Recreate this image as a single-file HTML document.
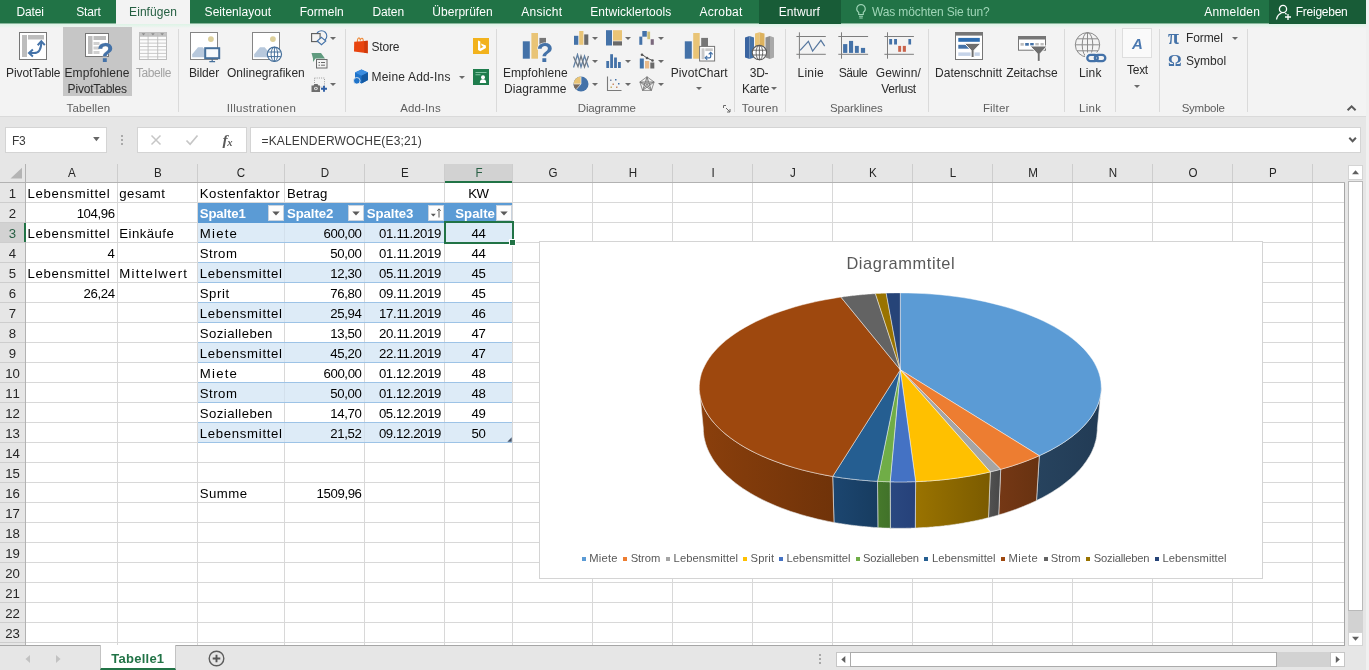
<!DOCTYPE html><html><head><meta charset="utf-8"><title>Excel</title><style>
*{box-sizing:border-box;margin:0;padding:0}
html,body{width:1369px;height:670px;overflow:hidden;background:#fff}
body{font-family:"Liberation Sans",sans-serif;font-size:12px;color:#262626;position:relative}
.abs{position:absolute}
.t{position:absolute;white-space:nowrap;line-height:1}
#tabbar{position:absolute;left:0;top:0;width:1366px;height:24px;background:#217346;border-bottom:1px solid #86b69b}
#tabbar .t{color:#fff;font-size:12px;top:6px}
#ribbon{position:absolute;left:0;top:24px;width:1366px;height:92px;background:linear-gradient(#def3e6,#e6f4ec 2px,#f3f3f3 4px,#f3f3f3)}
.rl{position:absolute;white-space:nowrap;font-size:12px;line-height:1;color:#262626;text-align:center;transform:translateX(-50%)}
.gl{position:absolute;white-space:nowrap;font-size:11.5px;line-height:1;color:#5c5c5c;top:102px;transform:translateX(-50%)}
.sep{position:absolute;top:29px;width:1px;height:83px;background:#dadada}
#fbar{position:absolute;left:0;top:116px;width:1366px;height:48px;background:#e6e6e6;border-top:1px solid #dadada}
.box{position:absolute;background:#fff;border:1px solid #d4d4d4}
#grid{position:absolute;left:0;top:164px;width:1345px;height:481px;background:#fff;overflow:hidden}
.ch{position:absolute;top:0;height:19px;background:#e6e6e6;font-size:13.5px;line-height:19px;text-align:center;color:#262626;border-right:1px solid #cfcfcf}
.rh{position:absolute;left:0;width:26px;height:20px;background:#e6e6e6;font-size:13.5px;line-height:20px;text-align:center;color:#262626;border-bottom:1px solid #cfcfcf}
.vl{position:absolute;top:19px;width:1px;height:461px;background:#d9d9d9}
.hl{position:absolute;left:26px;height:1px;width:1319px;background:#d9d9d9}
.c{position:absolute;height:19px;line-height:19px;font-size:14.2px;white-space:nowrap;color:#000;overflow:hidden}
.c.r{text-align:right;letter-spacing:-0.55px}
.c.m{text-align:center;letter-spacing:-0.55px}
.hd{position:absolute;height:20px;background:#5b9bd5;color:#fff;font-weight:700;font-size:13.6px;letter-spacing:-0.4px;line-height:19px;white-space:nowrap;overflow:hidden}
.fb{position:absolute;top:3px;width:14px;height:14px;background:#fff;border:1px solid #bcbcbc}
#bottom{position:absolute;left:0;top:645px;width:1369px;height:25px;background:#e6e6e6;border-top:1px solid #b5b5b5}
</style></head><body><div id="root" style="position:absolute;left:0;top:0;width:1369px;height:670px;will-change:transform">
<div id="tabbar">
<div class="abs" style="left:116px;top:0;width:74px;height:25px;background:#f3f3f3"></div>
<div class="abs" style="left:759px;top:0;width:82px;height:24px;background:#185c37"></div>
<div class="abs" style="left:1269px;top:0;width:97px;height:24px;background:#185c37"></div>
<span class="t" style="left:16.6px;letter-spacing:-0.179px">Datei</span>
<span class="t" style="left:76.2px;letter-spacing:-0.161px">Start</span>
<span class="t" style="left:204.6px;letter-spacing:0.032px">Seitenlayout</span>
<span class="t" style="left:299.7px;letter-spacing:0.014px">Formeln</span>
<span class="t" style="left:372.5px;letter-spacing:-0.108px">Daten</span>
<span class="t" style="left:432.3px;letter-spacing:0.028px">Überprüfen</span>
<span class="t" style="left:521.3px;letter-spacing:0.24px">Ansicht</span>
<span class="t" style="left:590.3px;letter-spacing:0.069px">Entwicklertools</span>
<span class="t" style="left:699.5px;letter-spacing:0.24px">Acrobat</span>
<span class="t" style="left:778.7px;letter-spacing:0.069px">Entwurf</span>
<span class="t" style="left:1204.2px;letter-spacing:0.236px">Anmelden</span>
<span class="t" style="left:1295.7px;letter-spacing:-0.243px">Freigeben</span>
<span class="t" style="left:129.1px;color:#255f42;letter-spacing:0.061px">Einfügen</span>
<span class="t" style="left:872px;color:#9fd5b7;letter-spacing:-0.131px">Was möchten Sie tun?</span>
<svg class="abs" style="left:854px;top:3px" width="14" height="18" viewBox="0 0 14 18"><path d="M7 1.5a4.3 4.3 0 0 0-2.3 7.9v2.1h4.6V9.4A4.3 4.3 0 0 0 7 1.5z" fill="none" stroke="#9fd5b7" stroke-width="1.1"/><path d="M5 13.2h4M5.3 15h3.4" stroke="#9fd5b7" stroke-width="1.1"/></svg>
<svg class="abs" style="left:1275px;top:3px" width="18" height="18" viewBox="0 0 18 18"><circle cx="8" cy="6" r="3.6" fill="none" stroke="#fff" stroke-width="1.3"/><path d="M1.5 16.5c.6-3.6 2.8-5.6 5-6.3M10 10.3c.6.2 1.2.6 1.7 1" fill="none" stroke="#fff" stroke-width="1.3"/><path d="M13 11v6M10 14h6" stroke="#fff" stroke-width="1.3"/></svg>
</div>
<div class="abs" style="left:1366px;top:0;width:3px;height:670px;background:#f0f0f0"></div>
<div id="ribbon"></div>
<div id="ribboncontent" class="abs" style="left:0;top:0;width:1366px;height:117px">
<div class="sep" style="left:178px"></div>
<div class="sep" style="left:345px"></div>
<div class="sep" style="left:496px"></div>
<div class="sep" style="left:734px"></div>
<div class="sep" style="left:785px"></div>
<div class="sep" style="left:928px"></div>
<div class="sep" style="left:1064px"></div>
<div class="sep" style="left:1115px"></div>
<div class="sep" style="left:1159px"></div>
<div class="sep" style="left:1247px"></div>
<svg class="abs" style="left:19px;top:32px" width="28" height="28" viewBox="0 0 28 28"><rect x="0.5" y="0.5" width="27" height="27" fill="#fff" stroke="#767676"/>
<rect x="3" y="3" width="5" height="22" fill="#bdbdbd"/><rect x="9" y="3" width="16" height="4.5" fill="#bdbdbd"/>
<path d="M10.200 21.100H15C20 21.100 22.300 18 22.300 10" fill="none" stroke="#4472a8" stroke-width="2"/>
<path d="M18.700 13.200L22.300 9.300 25.800 13.200" fill="none" stroke="#4472a8" stroke-width="2"/>
<path d="M13.900 17.600L10 21.100 13.900 24.600" fill="none" stroke="#4472a8" stroke-width="2"/></svg>
<span class="t" style="left:6.0px;top:67.0px;font-size:12px;letter-spacing:-0.097px;color:#2b2b2b">PivotTable</span>
<div class="abs" style="left:63px;top:27px;width:69px;height:69px;background:#c6c6c6"></div>
<svg class="abs" style="left:85px;top:33px" width="28" height="30" viewBox="0 0 28 30"><rect x="0.500" y="0.500" width="23" height="23" fill="#fff" stroke="#767676"/>
<rect x="3" y="3" width="4.500" height="18" fill="#bdbdbd"/><rect x="8.500" y="3" width="12.500" height="4" fill="#bdbdbd"/>
<rect x="8.500" y="9" width="6" height="3" fill="#d0d0d0"/><rect x="8.500" y="13.500" width="6" height="3" fill="#d0d0d0"/><rect x="8.500" y="18" width="6" height="3" fill="#d0d0d0"/>
<text x="12.100" y="28.500" font-family="Liberation Sans" font-weight="700" font-size="27.5" fill="#4472a8" stroke="#c6c6c6" stroke-width="0.600" paint-order="stroke">?</text></svg>
<span class="t" style="left:64.5px;top:67.0px;font-size:12px;letter-spacing:0.106px;color:#2b2b2b">Empfohlene</span>
<span class="t" style="left:67.6px;top:83.0px;font-size:12px;letter-spacing:-0.188px;color:#2b2b2b">PivotTables</span>
<svg class="abs" style="left:139px;top:32px" width="28" height="28" viewBox="0 0 28 28"><rect x="0.500" y="0.500" width="27" height="27" fill="#fcfcfc" stroke="#bdbdbd"/><rect x="0.500" y="0.500" width="27" height="3.800" fill="#c4c4c4"/><path d="M9.1 1V28" stroke="#bdbdbd" stroke-width="0.900"/><path d="M18.7 1V28" stroke="#bdbdbd" stroke-width="0.900"/><path d="M0 4.30H28" stroke="#bdbdbd" stroke-width="0.800"/><path d="M0 7.72H28" stroke="#bdbdbd" stroke-width="0.800"/><path d="M0 11.14H28" stroke="#bdbdbd" stroke-width="0.800"/><path d="M0 14.56H28" stroke="#bdbdbd" stroke-width="0.800"/><path d="M0 17.98H28" stroke="#bdbdbd" stroke-width="0.800"/><path d="M0 21.40H28" stroke="#bdbdbd" stroke-width="0.800"/><path d="M0 24.82H28" stroke="#bdbdbd" stroke-width="0.800"/><path d="M2.7 1.300h3.600l-1.800 2.200z" fill="#8c8c8c"/><path d="M12.1 1.300h3.600l-1.800 2.200z" fill="#8c8c8c"/><path d="M21.4 1.300h3.600l-1.800 2.200z" fill="#8c8c8c"/></svg>
<span class="t" style="left:136.0px;top:67.0px;font-size:12px;letter-spacing:-0.422px;color:#a3a3a3">Tabelle</span>
<span class="t" style="left:66.6px;top:103.2px;font-size:11.5px;letter-spacing:0.087px;color:#5e5e5e">Tabellen</span>
<svg class="abs" style="left:190px;top:32px" width="32" height="32" viewBox="0 0 32 32"><rect x="0.500" y="0.500" width="27" height="27" fill="#fff" stroke="#858585"/>
<circle cx="20.900" cy="7.100" r="2.900" fill="#dccf9a"/>
<path d="M2.200 25.300V22.200l5.800-7h4.700l8.300 10.100z" fill="#b7c8dc"/><rect x="15.200" y="16.200" width="14" height="10" fill="#f6f9fc" stroke="#46709b" stroke-width="2"/><path d="M22.200 27v2.300M19.300 29.700h5.800" stroke="#46709b" stroke-width="1.200"/></svg>
<span class="t" style="left:188.9px;top:67.0px;font-size:12px;letter-spacing:-0.078px;color:#2b2b2b">Bilder</span>
<svg class="abs" style="left:252px;top:32px" width="32" height="32" viewBox="0 0 32 32"><rect x="0.500" y="0.500" width="27" height="27" fill="#fff" stroke="#858585"/>
<circle cx="20.900" cy="7.100" r="2.900" fill="#dccf9a"/>
<path d="M2.200 25.300V22.200l5.800-7h4.700l8.300 10.100z" fill="#b7c8dc"/><circle cx="22.400" cy="22.300" r="7.100" fill="#fff" stroke="#46709b" stroke-width="1.200"/>
<ellipse cx="22.400" cy="22.300" rx="3.300" ry="7.100" fill="none" stroke="#46709b" stroke-width="1"/>
<path d="M16 20h12.800M16 24.600h12.800M22.400 15.200v14.200" stroke="#46709b" stroke-width="1" fill="none"/></svg>
<span class="t" style="left:227.0px;top:67.0px;font-size:12px;letter-spacing:0.031px;color:#2b2b2b">Onlinegrafiken</span>
<svg class="abs" style="left:311px;top:30px" width="17" height="16" viewBox="0 0 17 16"><circle cx="10.500" cy="6" r="5.300" fill="#f3f3f3" stroke="#4472a8" stroke-width="1.100"/>
<rect x="0.600" y="3.600" width="8.500" height="8" fill="#f3f3f3" stroke="#5a5a5a" stroke-width="1.100"/>
<path d="M10.500 7.300l4.300 3.700-4.300 3.700-4.300-3.700z" fill="#f3f3f3" stroke="#4472a8" stroke-width="1.100"/></svg>
<div class="abs" style="left:330.4px;top:36.9px;width:0;height:0;border-left:3.2px solid transparent;border-right:3.2px solid transparent;border-top:3.5px solid #6a6a6a"></div>
<svg class="abs" style="left:311px;top:52px" width="17" height="17" viewBox="0 0 17 17"><path d="M0.500 1h9.500l4 5.500h-9.500l-2.500 3.500v-3.500z" fill="#5f9a7e"/>
<rect x="5.500" y="7.500" width="10.500" height="8.500" fill="#f3f3f3" stroke="#6a6a6a" stroke-width="1"/>
<path d="M7.500 10.500h1.500M10 10.500h4M7.500 13.200h1.500M10 13.200h4" stroke="#6a6a6a" stroke-width="1"/></svg>
<svg class="abs" style="left:311px;top:77px" width="17" height="16" viewBox="0 0 17 16"><rect x="3.500" y="1" width="10" height="9" fill="none" stroke="#8a8a8a" stroke-width="0.800" stroke-dasharray="1 1.200"/>
<path d="M0.500 8.500h2l1-1.500h3l1 1.500h1.500v6.500h-8.500z" fill="#6e6e6e"/><circle cx="4.900" cy="11.500" r="1.800" fill="#f3f3f3"/><circle cx="4.900" cy="11.500" r="0.900" fill="#6e6e6e"/>
<path d="M10 11.700h6M13 8.700v6" stroke="#2f5fa5" stroke-width="1.900"/></svg>
<div class="abs" style="left:330.4px;top:83.4px;width:0;height:0;border-left:3.2px solid transparent;border-right:3.2px solid transparent;border-top:3.5px solid #6a6a6a"></div>
<span class="t" style="left:226.8px;top:103.2px;font-size:11.5px;letter-spacing:0.302px;color:#5e5e5e">Illustrationen</span>
<svg class="abs" style="left:353px;top:35px" width="17" height="19" viewBox="0 0 17 19"><path d="M4.300 7.200C4.300 1.800 7 1.800 7.300 5.500 7.800 2.200 10.300 2.400 10.300 6.300" fill="none" stroke="#ee8a3a" stroke-width="1.100"/><path d="M1.200 6.700l13.500-1v12.500l-13.700-1.800z" fill="#e8440f"/><path d="M11.300 5.950l3.400-.25v12.500l-3.400-.45z" fill="#cf3a0c"/></svg>
<span class="t" style="left:371.5px;top:41.0px;font-size:12px;letter-spacing:-0.172px;color:#2b2b2b">Store</span>
<svg class="abs" style="left:353px;top:69px" width="17" height="16" viewBox="0 0 17 16"><path d="M8.500 0.500l6.500 3v7.500l-6.500 3.500-6.500-3.500v-7.500z" fill="#1f73c9"/><path d="M8.500 0.500l6.500 3-6.500 3.300-6.500-3.300z" fill="#3b8de0"/><path d="M8.500 6.800l6.500-3.300v7.500l-6.500 3.500z" fill="#155aa3"/><circle cx="3.800" cy="11.800" r="3.300" fill="#1f73c9" stroke="#f3f3f3" stroke-width="0.800"/></svg>
<span class="t" style="left:371.5px;top:71.0px;font-size:12px;letter-spacing:0.182px;color:#2b2b2b">Meine Add-Ins</span>
<div class="abs" style="left:459.2px;top:76.0px;width:0;height:0;border-left:3.2px solid transparent;border-right:3.2px solid transparent;border-top:3.5px solid #6a6a6a"></div>
<svg class="abs" style="left:473px;top:38px" width="16" height="16" viewBox="0 0 16 16"><rect width="16" height="16" fill="#f2b21c"/><path d="M5 2.500l2.300.9v7l3.200-1.700-1.600-.8-1-2.300 5 1.800v2.500l-5.600 3.300-2.300-1.300z" fill="#fff"/></svg>
<svg class="abs" style="left:473px;top:69px" width="16" height="16" viewBox="0 0 16 16"><rect width="16" height="16" fill="#1f7d4d"/><path d="M2.500 3.500h11M2.500 5.800h5" stroke="#7fc3a0" stroke-width="1.100"/><circle cx="10" cy="8.200" r="2" fill="#fff"/><path d="M6.800 14c0-2.800 1.300-3.800 3.200-3.800s3.200 1 3.200 3.800z" fill="#fff"/></svg>
<span class="t" style="left:400.3px;top:103.2px;font-size:11.5px;letter-spacing:0.118px;color:#5e5e5e">Add-Ins</span>
<svg class="abs" style="left:520px;top:32px" width="34" height="32" viewBox="0 0 34 32"><rect x="2.800" y="9.300" width="7" height="17.400" fill="#4472a8"/><rect x="11.400" y="1" width="6.600" height="25.700" fill="#e9c476"/><rect x="19.400" y="5.900" width="6.600" height="8" fill="#767676"/>
<text x="16.600" y="29.500" font-family="Liberation Sans" font-weight="700" font-size="27.5" fill="#4472a8" stroke="#f3f3f3" stroke-width="1.200" paint-order="stroke">?</text></svg>
<span class="t" style="left:502.9px;top:67.0px;font-size:12px;letter-spacing:0.084px;color:#2b2b2b">Empfohlene</span>
<span class="t" style="left:504.0px;top:83.0px;font-size:12px;letter-spacing:0.061px;color:#2b2b2b">Diagramme</span>
<svg class="abs" style="left:573px;top:30px" width="16" height="16" viewBox="0 0 16 16"><rect x="1" y="5.800" width="4.300" height="9" fill="#4472a8"/><rect x="6.200" y="1" width="4.200" height="13.800" fill="#e9c476"/><rect x="11.200" y="4.400" width="4.100" height="10.400" fill="#6a6a6a"/></svg>
<svg class="abs" style="left:606px;top:30px" width="16" height="16" viewBox="0 0 16 16"><rect x="0" y="0.200" width="6" height="15.300" fill="#4472a8"/><rect x="7" y="0.200" width="9" height="10.400" fill="#e9c476"/><rect x="7" y="11.300" width="9" height="4.200" fill="#6a6a6a"/></svg>
<svg class="abs" style="left:639px;top:30px" width="16" height="16" viewBox="0 0 16 16"><rect x="0.300" y="6.600" width="3" height="8.200" fill="#4472a8"/><rect x="3.300" y="1" width="4.500" height="5.700" fill="#4472a8"/><rect x="8.300" y="1.600" width="2.800" height="7.600" fill="#cdbf78"/><rect x="11.700" y="9.200" width="3.100" height="5.600" fill="#7a687c"/></svg>
<svg class="abs" style="left:573px;top:53px" width="16" height="16" viewBox="0 0 16 16"><path d="M0.500 14.500L4.500 1.500 8 14 11.500 3 15.500 14.500" fill="none" stroke="#5f7fa3" stroke-width="1.300"/><path d="M0.500 3.500L5 13.500 8 3 11.500 14 15.500 3" fill="none" stroke="#6e7884" stroke-width="1.300"/></svg>
<svg class="abs" style="left:606px;top:53px" width="16" height="16" viewBox="0 0 16 16"><rect x="0.300" y="8" width="2.800" height="7" fill="#4472a8"/><rect x="4.200" y="1.200" width="2.800" height="13.800" fill="#4472a8"/><rect x="8.100" y="4.500" width="2.800" height="10.500" fill="#4472a8"/><rect x="12" y="9" width="2.800" height="6" fill="#4472a8"/></svg>
<svg class="abs" style="left:639px;top:53px" width="16" height="16" viewBox="0 0 16 16"><rect x="0.800" y="5.500" width="4" height="10" fill="#4472a8"/><rect x="6" y="8" width="4.200" height="7.500" fill="#e8b98a"/><rect x="11.300" y="9.500" width="4" height="6" fill="#6a6a6a"/><path d="M3 1.500l5 3.500 5.500 2.500" stroke="#555" stroke-width="1" fill="none"/><circle cx="3" cy="1.700" r="1.300" fill="#555"/><circle cx="8" cy="5" r="1.300" fill="#555"/><circle cx="13.500" cy="7.500" r="1.300" fill="#555"/></svg>
<svg class="abs" style="left:573px;top:76px" width="16" height="16" viewBox="0 0 16 16"><circle cx="8" cy="8" r="7.500" fill="#4472a8"/><path d="M8 8V0.500A7.500 7.500 0 0 0 0.500 8z" fill="#e9c476"/><path d="M8 8H0.500a7.500 7.500 0 0 0 2.600 5.700z" fill="#7a6a5a"/><path d="M8 0.500V8H0.500M8 8l-5 5.700" stroke="#f3f3f3" stroke-width="0.700" fill="none"/></svg>
<svg class="abs" style="left:606px;top:76px" width="16" height="16" viewBox="0 0 16 16"><path d="M1.500 0.500V14.500H15.500" fill="none" stroke="#7a7a7a" stroke-width="1.100"/><rect x="4" y="3.500" width="1.500" height="1.500" fill="#7a8aa8"/><rect x="9" y="3" width="1.500" height="1.500" fill="#4472a8"/><rect x="6.500" y="7.500" width="1.500" height="1.500" fill="#c98a6a"/><rect x="12" y="7" width="1.500" height="1.500" fill="#4472a8"/><rect x="4.500" y="10.500" width="1.500" height="1.500" fill="#c9b06a"/><rect x="10" y="10.500" width="1.500" height="1.500" fill="#c98a6a"/></svg>
<svg class="abs" style="left:639px;top:76px" width="16" height="16" viewBox="0 0 16 16"><polygon points="8.0,0.8 15.1,6.0 12.4,14.4 3.6,14.4 0.9,6.0" fill="none" stroke="#858585" stroke-width="0.900"/><polygon points="8.0,0.8 12.4,14.4 0.9,6.0 15.1,6.0 3.6,14.4" fill="none" stroke="#7a7a7a" stroke-width="0.900"/><path d="M8 8.300L8.0 0.8M8 8.300L15.1 6.0M8 8.300L12.4 14.4M8 8.300L3.6 14.4M8 8.300L0.9 6.0" stroke="#7a7a7a" stroke-width="0.900" fill="none"/></svg>
<div class="abs" style="left:592.4px;top:36.9px;width:0;height:0;border-left:3.2px solid transparent;border-right:3.2px solid transparent;border-top:3.5px solid #6a6a6a"></div>
<div class="abs" style="left:592.4px;top:60.2px;width:0;height:0;border-left:3.2px solid transparent;border-right:3.2px solid transparent;border-top:3.5px solid #6a6a6a"></div>
<div class="abs" style="left:592.4px;top:83.4px;width:0;height:0;border-left:3.2px solid transparent;border-right:3.2px solid transparent;border-top:3.5px solid #6a6a6a"></div>
<div class="abs" style="left:625.3px;top:36.9px;width:0;height:0;border-left:3.2px solid transparent;border-right:3.2px solid transparent;border-top:3.5px solid #6a6a6a"></div>
<div class="abs" style="left:625.3px;top:60.2px;width:0;height:0;border-left:3.2px solid transparent;border-right:3.2px solid transparent;border-top:3.5px solid #6a6a6a"></div>
<div class="abs" style="left:625.3px;top:83.4px;width:0;height:0;border-left:3.2px solid transparent;border-right:3.2px solid transparent;border-top:3.5px solid #6a6a6a"></div>
<div class="abs" style="left:658.3px;top:36.9px;width:0;height:0;border-left:3.2px solid transparent;border-right:3.2px solid transparent;border-top:3.5px solid #6a6a6a"></div>
<div class="abs" style="left:658.3px;top:60.2px;width:0;height:0;border-left:3.2px solid transparent;border-right:3.2px solid transparent;border-top:3.5px solid #6a6a6a"></div>
<div class="abs" style="left:658.3px;top:83.4px;width:0;height:0;border-left:3.2px solid transparent;border-right:3.2px solid transparent;border-top:3.5px solid #6a6a6a"></div>
<svg class="abs" style="left:683px;top:32px" width="34" height="32" viewBox="0 0 34 32"><rect x="1.800" y="9.300" width="7" height="17.400" fill="#4472a8"/><rect x="10.200" y="1" width="6.500" height="25.700" fill="#e9c476"/><rect x="18.200" y="5.900" width="6.800" height="9" fill="#767676"/>
<rect x="16.600" y="14.400" width="15" height="14.600" fill="#fff" stroke="#767676" stroke-width="1"/><rect x="18.500" y="16.300" width="3" height="11" fill="#c8c8c8"/><rect x="22.300" y="16.300" width="7.500" height="2.800" fill="#c8c8c8"/>
<path d="M22.300 25.800H26.500C27.500 25.800 27.700 25.300 27.700 24.500V20.800" fill="none" stroke="#4472a8" stroke-width="1.300"/><path d="M25.700 22.400l2-2.100 2 2.100M24.200 23.900l-2 1.900 2 1.900" fill="none" stroke="#4472a8" stroke-width="1.200"/></svg>
<span class="t" style="left:670.7px;top:67.0px;font-size:12px;letter-spacing:0.108px;color:#2b2b2b">PivotChart</span>
<div class="abs" style="left:696.2px;top:87.1px;width:0;height:0;border-left:3.2px solid transparent;border-right:3.2px solid transparent;border-top:3.5px solid #6a6a6a"></div>
<svg class="abs" style="left:723px;top:105px" width="8" height="8" viewBox="0 0 8 8"><path d="M0.500 3V0.500H3M3 3l4 4M7 4v3H4" fill="none" stroke="#6a6a6a" stroke-width="1"/></svg>
<span class="t" style="left:577.8px;top:103.2px;font-size:11.5px;letter-spacing:-0.173px;color:#5e5e5e">Diagramme</span>
<svg class="abs" style="left:744px;top:32px" width="32" height="30" viewBox="0 0 32 30"><path d="M1 5.500l4.500-1.500v23l-4.500-1.500z" fill="#3a64a0"/><path d="M5.500 4l4.500 1.500v20l-4.500 1.500z" fill="#4472a8"/>
<path d="M11 1.500l4.500-1.200v14h-4.500z" fill="#e9c476"/><path d="M15.500 0.300l5 1.200v12.800h-5z" fill="#ddb25e"/>
<path d="M21.500 5.500l4.500-1.500v23l-4.500-1.500z" fill="#8f8f8f"/><path d="M26 4l4 1.500v20l-4 1.500z" fill="#a9a9a9"/>
<circle cx="15.400" cy="20.600" r="7.200" fill="#fff" stroke="#5a5a5a" stroke-width="1.100"/><ellipse cx="15.400" cy="20.600" rx="3.300" ry="7.200" fill="none" stroke="#5a5a5a" stroke-width="0.900"/><path d="M9 18.200h12.800M9 23h12.800M15.400 13.400v14.400" stroke="#5a5a5a" stroke-width="0.900"/></svg>
<span class="t" style="left:749.8px;top:67.0px;font-size:12px;letter-spacing:-0.272px;color:#2b2b2b">3D-</span>
<span class="t" style="left:742.0px;top:83.0px;font-size:12px;letter-spacing:-0.297px;color:#2b2b2b">Karte</span>
<div class="abs" style="left:771.1px;top:87.1px;width:0;height:0;border-left:3.2px solid transparent;border-right:3.2px solid transparent;border-top:3.5px solid #6a6a6a"></div>
<span class="t" style="left:741.7px;top:103.2px;font-size:11.5px;letter-spacing:0.276px;color:#5e5e5e">Touren</span>
<svg class="abs" style="left:796px;top:32px" width="31" height="28" viewBox="0 0 31 28"><path d="M3.400 0.300V26.700M0.400 4.500H29.800M0.400 22.300H29.800" stroke="#7d7d7d" stroke-width="1" fill="none"/><path d="M4.100 18.400L12.400 9.300 16.600 19.100 24.900 8.400 28.700 14.200" fill="none" stroke="#56779f" stroke-width="1.200"/></svg>
<span class="t" style="left:797.6px;top:67.0px;font-size:12px;letter-spacing:0.21px;color:#2b2b2b">Linie</span>
<svg class="abs" style="left:838px;top:32px" width="31" height="28" viewBox="0 0 31 28"><path d="M3.500 0.300V26.700M0.300 4.500H30.100M0.300 22.300H30.100" stroke="#7d7d7d" stroke-width="1" fill="none"/><rect x="5.100" y="12.100" width="4.200" height="8.800" fill="#4472a8"/><rect x="11" y="8.900" width="4.100" height="12" fill="#4472a8"/><rect x="16.900" y="13.900" width="3.900" height="7" fill="#4472a8"/><rect x="22.900" y="15.900" width="4.200" height="5" fill="#4472a8"/></svg>
<span class="t" style="left:838.7px;top:67.0px;font-size:12px;letter-spacing:-0.451px;color:#2b2b2b">Säule</span>
<svg class="abs" style="left:884px;top:32px" width="31" height="28" viewBox="0 0 31 28"><path d="M3.500 0.300V26.700M0.400 4.500H29.900M0.400 22.300H29.900" stroke="#7d7d7d" stroke-width="1" fill="none"/><rect x="5.200" y="7" width="2.900" height="5.500" fill="#4472a8"/><rect x="10.100" y="7" width="2.900" height="5.500" fill="#4472a8"/><rect x="24.400" y="7" width="2.700" height="5.500" fill="#4472a8"/><rect x="14.200" y="13.900" width="2.900" height="5.900" fill="#c9624a"/><rect x="18.800" y="13.900" width="3.100" height="5.900" fill="#c9624a"/></svg>
<span class="t" style="left:875.7px;top:67.0px;font-size:12px;letter-spacing:0.195px;color:#2b2b2b">Gewinn/</span>
<span class="t" style="left:881.3px;top:83.0px;font-size:12px;letter-spacing:-0.298px;color:#2b2b2b">Verlust</span>
<span class="t" style="left:829.9px;top:103.2px;font-size:11.5px;letter-spacing:-0.084px;color:#5e5e5e">Sparklines</span>
<svg class="abs" style="left:955px;top:32px" width="28" height="28" viewBox="0 0 28 28"><rect x="0.500" y="0.500" width="27" height="27" fill="#fff" stroke="#767676"/><rect x="0" y="0" width="28" height="3.600" fill="#767676"/>
<rect x="3.300" y="5.900" width="21.500" height="3.900" fill="#2e6db0"/><rect x="3.300" y="12.800" width="12.500" height="3.900" fill="#4472a8"/><rect x="3.300" y="20.400" width="21.500" height="3.500" fill="#c5d3e8"/>
<path d="M9.300 11.300h16.600l-6.800 7v7.200h-3v-7.200z" fill="#6e6e6e" stroke="#fff" stroke-width="1"/></svg>
<span class="t" style="left:935.1px;top:67.0px;font-size:12px;letter-spacing:0.027px;color:#2b2b2b">Datenschnitt</span>
<svg class="abs" style="left:1018px;top:36px" width="30" height="27" viewBox="0 0 30 27"><rect x="0.500" y="0.500" width="27" height="13.700" fill="#fff" stroke="#767676"/><rect x="0" y="0" width="28" height="3.500" fill="#767676"/>
<rect x="2.500" y="7" width="3.300" height="2.700" fill="#bdbdbd"/><rect x="7.200" y="7" width="3.600" height="2.700" fill="#4472a8"/><rect x="12.200" y="7" width="3.500" height="2.700" fill="#4472a8"/><rect x="17.300" y="7" width="3.500" height="2.700" fill="#bdbdbd"/><rect x="22.500" y="7" width="3.200" height="2.700" fill="#bdbdbd"/>
<path d="M12 10h17.200l-7 7.600v7.800h-3v-7.800z" fill="#6e6e6e" stroke="#fff" stroke-width="1"/></svg>
<span class="t" style="left:1006.2px;top:67.0px;font-size:12px;letter-spacing:-0.079px;color:#2b2b2b">Zeitachse</span>
<span class="t" style="left:982.9px;top:103.2px;font-size:11.5px;letter-spacing:0.197px;color:#5e5e5e">Filter</span>
<svg class="abs" style="left:1074px;top:31.7px" width="34" height="32" viewBox="0 0 34 32"><circle cx="13.500" cy="12.800" r="12.200" fill="none" stroke="#8a8a8a" stroke-width="1"/><ellipse cx="13.500" cy="12.800" rx="5.300" ry="12.200" fill="none" stroke="#8a8a8a" stroke-width="1"/>
<path d="M1.300 12.800h24.400M3 6.800h21M3 18.800h21M13.500 0.600v24.400" stroke="#8a8a8a" stroke-width="1" fill="none"/>
<rect x="11" y="20.500" width="22" height="11" fill="#f3f3f3"/>
<rect x="13.300" y="22.800" width="10.500" height="6.400" rx="3.200" fill="none" stroke="#4472a8" stroke-width="2.300"/><rect x="20.800" y="22.800" width="10.500" height="6.400" rx="3.200" fill="none" stroke="#4472a8" stroke-width="2.300"/></svg>
<span class="t" style="left:1079.0px;top:67.0px;font-size:12px;letter-spacing:0.128px;color:#2b2b2b">Link</span>
<span class="t" style="left:1079.0px;top:103.2px;font-size:11.5px;letter-spacing:0.28px;color:#5e5e5e">Link</span>
<div class="abs" style="left:1122px;top:28px;width:30px;height:30px;background:#fafafa;border:1px solid #dedede"></div>
<span class="t" style="left:1132px;top:36px;font-size:15px;font-weight:700;font-style:italic;color:#4a78b0">A</span>
<span class="t" style="left:1127.0px;top:64.0px;font-size:12px;letter-spacing:-0.272px;color:#2b2b2b">Text</span>
<div class="abs" style="left:1134.1px;top:85.4px;width:0;height:0;border-left:3.2px solid transparent;border-right:3.2px solid transparent;border-top:3.5px solid #6a6a6a"></div>
<span class="t" style="left:1168px;top:27px;font-family:'Liberation Serif',serif;font-size:20px;font-weight:700;color:#4472a8">π</span>
<span class="t" style="left:1185.9px;top:32.0px;font-size:12px;letter-spacing:-0.069px;color:#2b2b2b">Formel</span>
<div class="abs" style="left:1231.9px;top:36.9px;width:0;height:0;border-left:3.2px solid transparent;border-right:3.2px solid transparent;border-top:3.5px solid #6a6a6a"></div>
<span class="t" style="left:1168px;top:51.500px;font-family:'Liberation Serif',serif;font-size:17px;font-weight:700;color:#4472a8">Ω</span>
<span class="t" style="left:1185.9px;top:55.0px;font-size:12px;letter-spacing:0.077px;color:#2b2b2b">Symbol</span>
<span class="t" style="left:1181.7px;top:103.2px;font-size:11.5px;letter-spacing:-0.267px;color:#5e5e5e">Symbole</span>
<svg class="abs" style="left:1346px;top:104px" width="12" height="8" viewBox="0 0 12 8"><path d="M1.600 6.300l4-4 4 4" fill="none" stroke="#5a5a5a" stroke-width="2"/></svg>
</div>
<div id="fbar">
<div class="box" style="left:5px;top:10px;width:102px;height:26px"></div>
<span class="t" style="left:12.1px;top:18px;font-size:12px;color:#3a3a3a;letter-spacing:-0.316px">F3</span>
<svg class="abs" style="left:92px;top:18px" width="9" height="8" viewBox="0 0 9 8"><path d="M1.100 1.900h6.600l-3.300 4.400z" fill="#666"/></svg>
<div class="abs" style="left:121px;top:18px;width:2px;height:2px;background:#aaa;box-shadow:0 4px 0 #aaa,0 8px 0 #aaa"></div>
<div class="box" style="left:137px;top:10px;width:110px;height:26px"></div>
<svg class="abs" style="left:149.600px;top:16.80000000000001px" width="12" height="12" viewBox="0 0 12 12"><path d="M1.500 1.500l9 9M10.500 1.500l-9 9" stroke="#c6c6c6" stroke-width="1.500" fill="none"/></svg>
<svg class="abs" style="left:185.100px;top:17.19999999999999px" width="14" height="12" viewBox="0 0 14 12"><path d="M1.500 6.500l3.600 3.800L12.500 1.500" stroke="#c6c6c6" stroke-width="1.700" fill="none"/></svg>
<span class="t" style="left:222.500px;top:14.5px;font-family:'Liberation Serif',serif;font-style:italic;font-weight:700;font-size:15.5px;color:#5a5a5a">f<span style="font-size:10.5px;position:relative;top:1.5px;left:-0.5px">x</span></span>
<div class="box" style="left:250px;top:10px;width:1111px;height:26px"></div>
<span class="t" style="left:261.500px;top:18px;font-size:12px;color:#3a3a3a;letter-spacing:0.169px">=KALENDERWOCHE(E3;21)</span>
<svg class="abs" style="left:1348px;top:19px" width="10" height="8" viewBox="0 0 10 8"><path d="M1.300 1.800l3.300 3.400 3.300-3.400" stroke="#5a5a5a" stroke-width="2" fill="none"/></svg>
</div>
<div class="abs" style="left:0;top:164px;width:1345px;height:481px;background:#fff"></div>
<div class="abs" style="left:0;top:164px;width:1345px;height:18px;background:#e6e6e6"></div>
<div class="abs" style="left:0;top:164px;width:25px;height:481px;background:#e6e6e6"></div>
<div class="abs" style="left:445px;top:164px;width:67px;height:17px;background:#d2d2d2"></div>
<div class="abs" style="left:445px;top:181px;width:67px;height:2px;background:#217346"></div>
<div class="abs" style="left:0;top:223px;width:24px;height:19px;background:#d2d2d2"></div>
<div class="abs" style="left:24px;top:223px;width:2px;height:19px;background:#217346"></div>
<svg class="abs" style="left:9px;top:166px" width="14" height="14" viewBox="0 0 14 14"><path d="M13 1.800V12.600H1.500z" fill="#b4b4b4"/></svg>
<div class="abs" style="left:117px;top:164px;width:1px;height:18px;background:#cdcdcd"></div>
<div class="abs" style="left:197px;top:164px;width:1px;height:18px;background:#cdcdcd"></div>
<div class="abs" style="left:284px;top:164px;width:1px;height:18px;background:#cdcdcd"></div>
<div class="abs" style="left:364px;top:164px;width:1px;height:18px;background:#cdcdcd"></div>
<div class="abs" style="left:444px;top:164px;width:1px;height:18px;background:#cdcdcd"></div>
<div class="abs" style="left:512px;top:164px;width:1px;height:18px;background:#cdcdcd"></div>
<div class="abs" style="left:592px;top:164px;width:1px;height:18px;background:#cdcdcd"></div>
<div class="abs" style="left:672px;top:164px;width:1px;height:18px;background:#cdcdcd"></div>
<div class="abs" style="left:752px;top:164px;width:1px;height:18px;background:#cdcdcd"></div>
<div class="abs" style="left:832px;top:164px;width:1px;height:18px;background:#cdcdcd"></div>
<div class="abs" style="left:912px;top:164px;width:1px;height:18px;background:#cdcdcd"></div>
<div class="abs" style="left:992px;top:164px;width:1px;height:18px;background:#cdcdcd"></div>
<div class="abs" style="left:1072px;top:164px;width:1px;height:18px;background:#cdcdcd"></div>
<div class="abs" style="left:1152px;top:164px;width:1px;height:18px;background:#cdcdcd"></div>
<div class="abs" style="left:1232px;top:164px;width:1px;height:18px;background:#cdcdcd"></div>
<div class="abs" style="left:1312px;top:164px;width:1px;height:18px;background:#cdcdcd"></div>
<div class="abs" style="left:117px;top:183px;width:1px;height:462px;background:#d8d8d8"></div>
<div class="abs" style="left:197px;top:183px;width:1px;height:462px;background:#d8d8d8"></div>
<div class="abs" style="left:284px;top:183px;width:1px;height:462px;background:#d8d8d8"></div>
<div class="abs" style="left:364px;top:183px;width:1px;height:462px;background:#d8d8d8"></div>
<div class="abs" style="left:444px;top:183px;width:1px;height:462px;background:#d8d8d8"></div>
<div class="abs" style="left:512px;top:183px;width:1px;height:462px;background:#d8d8d8"></div>
<div class="abs" style="left:592px;top:183px;width:1px;height:462px;background:#d8d8d8"></div>
<div class="abs" style="left:672px;top:183px;width:1px;height:462px;background:#d8d8d8"></div>
<div class="abs" style="left:752px;top:183px;width:1px;height:462px;background:#d8d8d8"></div>
<div class="abs" style="left:832px;top:183px;width:1px;height:462px;background:#d8d8d8"></div>
<div class="abs" style="left:912px;top:183px;width:1px;height:462px;background:#d8d8d8"></div>
<div class="abs" style="left:992px;top:183px;width:1px;height:462px;background:#d8d8d8"></div>
<div class="abs" style="left:1072px;top:183px;width:1px;height:462px;background:#d8d8d8"></div>
<div class="abs" style="left:1152px;top:183px;width:1px;height:462px;background:#d8d8d8"></div>
<div class="abs" style="left:1232px;top:183px;width:1px;height:462px;background:#d8d8d8"></div>
<div class="abs" style="left:1312px;top:183px;width:1px;height:462px;background:#d8d8d8"></div>
<div class="abs" style="left:26px;top:202px;width:1319px;height:1px;background:#d8d8d8"></div>
<div class="abs" style="left:0;top:202px;width:25px;height:1px;background:#cdcdcd"></div>
<div class="abs" style="left:26px;top:222px;width:1319px;height:1px;background:#d8d8d8"></div>
<div class="abs" style="left:0;top:222px;width:25px;height:1px;background:#cdcdcd"></div>
<div class="abs" style="left:26px;top:242px;width:1319px;height:1px;background:#d8d8d8"></div>
<div class="abs" style="left:0;top:242px;width:25px;height:1px;background:#cdcdcd"></div>
<div class="abs" style="left:26px;top:262px;width:1319px;height:1px;background:#d8d8d8"></div>
<div class="abs" style="left:0;top:262px;width:25px;height:1px;background:#cdcdcd"></div>
<div class="abs" style="left:26px;top:282px;width:1319px;height:1px;background:#d8d8d8"></div>
<div class="abs" style="left:0;top:282px;width:25px;height:1px;background:#cdcdcd"></div>
<div class="abs" style="left:26px;top:302px;width:1319px;height:1px;background:#d8d8d8"></div>
<div class="abs" style="left:0;top:302px;width:25px;height:1px;background:#cdcdcd"></div>
<div class="abs" style="left:26px;top:322px;width:1319px;height:1px;background:#d8d8d8"></div>
<div class="abs" style="left:0;top:322px;width:25px;height:1px;background:#cdcdcd"></div>
<div class="abs" style="left:26px;top:342px;width:1319px;height:1px;background:#d8d8d8"></div>
<div class="abs" style="left:0;top:342px;width:25px;height:1px;background:#cdcdcd"></div>
<div class="abs" style="left:26px;top:362px;width:1319px;height:1px;background:#d8d8d8"></div>
<div class="abs" style="left:0;top:362px;width:25px;height:1px;background:#cdcdcd"></div>
<div class="abs" style="left:26px;top:382px;width:1319px;height:1px;background:#d8d8d8"></div>
<div class="abs" style="left:0;top:382px;width:25px;height:1px;background:#cdcdcd"></div>
<div class="abs" style="left:26px;top:402px;width:1319px;height:1px;background:#d8d8d8"></div>
<div class="abs" style="left:0;top:402px;width:25px;height:1px;background:#cdcdcd"></div>
<div class="abs" style="left:26px;top:422px;width:1319px;height:1px;background:#d8d8d8"></div>
<div class="abs" style="left:0;top:422px;width:25px;height:1px;background:#cdcdcd"></div>
<div class="abs" style="left:26px;top:442px;width:1319px;height:1px;background:#d8d8d8"></div>
<div class="abs" style="left:0;top:442px;width:25px;height:1px;background:#cdcdcd"></div>
<div class="abs" style="left:26px;top:462px;width:1319px;height:1px;background:#d8d8d8"></div>
<div class="abs" style="left:0;top:462px;width:25px;height:1px;background:#cdcdcd"></div>
<div class="abs" style="left:26px;top:482px;width:1319px;height:1px;background:#d8d8d8"></div>
<div class="abs" style="left:0;top:482px;width:25px;height:1px;background:#cdcdcd"></div>
<div class="abs" style="left:26px;top:502px;width:1319px;height:1px;background:#d8d8d8"></div>
<div class="abs" style="left:0;top:502px;width:25px;height:1px;background:#cdcdcd"></div>
<div class="abs" style="left:26px;top:522px;width:1319px;height:1px;background:#d8d8d8"></div>
<div class="abs" style="left:0;top:522px;width:25px;height:1px;background:#cdcdcd"></div>
<div class="abs" style="left:26px;top:542px;width:1319px;height:1px;background:#d8d8d8"></div>
<div class="abs" style="left:0;top:542px;width:25px;height:1px;background:#cdcdcd"></div>
<div class="abs" style="left:26px;top:562px;width:1319px;height:1px;background:#d8d8d8"></div>
<div class="abs" style="left:0;top:562px;width:25px;height:1px;background:#cdcdcd"></div>
<div class="abs" style="left:26px;top:582px;width:1319px;height:1px;background:#d8d8d8"></div>
<div class="abs" style="left:0;top:582px;width:25px;height:1px;background:#cdcdcd"></div>
<div class="abs" style="left:26px;top:602px;width:1319px;height:1px;background:#d8d8d8"></div>
<div class="abs" style="left:0;top:602px;width:25px;height:1px;background:#cdcdcd"></div>
<div class="abs" style="left:26px;top:622px;width:1319px;height:1px;background:#d8d8d8"></div>
<div class="abs" style="left:0;top:622px;width:25px;height:1px;background:#cdcdcd"></div>
<div class="abs" style="left:26px;top:642px;width:1319px;height:1px;background:#d8d8d8"></div>
<div class="abs" style="left:0;top:642px;width:25px;height:1px;background:#cdcdcd"></div>
<div class="abs" style="left:0;top:182px;width:1345px;height:1px;background:#b2b2b2"></div>
<div class="abs" style="left:25px;top:164px;width:1px;height:481px;background:#b2b2b2"></div>
<div class="abs" style="left:445px;top:181px;width:67px;height:2px;background:#217346"></div>
<div class="abs" style="left:24px;top:223px;width:2px;height:19px;background:#217346"></div>
<span class="abs" style="left:61.5px;top:165px;width:20px;text-align:center;line-height:16px;font-size:13.2px;color:#262626;transform:scaleX(0.88)">A</span>
<span class="abs" style="left:147.5px;top:165px;width:20px;text-align:center;line-height:16px;font-size:13.2px;color:#262626;transform:scaleX(0.88)">B</span>
<span class="abs" style="left:231.0px;top:165px;width:20px;text-align:center;line-height:16px;font-size:13.2px;color:#262626;transform:scaleX(0.88)">C</span>
<span class="abs" style="left:314.5px;top:165px;width:20px;text-align:center;line-height:16px;font-size:13.2px;color:#262626;transform:scaleX(0.88)">D</span>
<span class="abs" style="left:394.5px;top:165px;width:20px;text-align:center;line-height:16px;font-size:13.2px;color:#262626;transform:scaleX(0.88)">E</span>
<span class="abs" style="left:468.5px;top:165px;width:20px;text-align:center;line-height:16px;font-size:13.2px;color:#2a6045;transform:scaleX(0.88)">F</span>
<span class="abs" style="left:542.5px;top:165px;width:20px;text-align:center;line-height:16px;font-size:13.2px;color:#262626;transform:scaleX(0.88)">G</span>
<span class="abs" style="left:622.5px;top:165px;width:20px;text-align:center;line-height:16px;font-size:13.2px;color:#262626;transform:scaleX(0.88)">H</span>
<span class="abs" style="left:702.5px;top:165px;width:20px;text-align:center;line-height:16px;font-size:13.2px;color:#262626;transform:scaleX(0.88)">I</span>
<span class="abs" style="left:782.5px;top:165px;width:20px;text-align:center;line-height:16px;font-size:13.2px;color:#262626;transform:scaleX(0.88)">J</span>
<span class="abs" style="left:862.5px;top:165px;width:20px;text-align:center;line-height:16px;font-size:13.2px;color:#262626;transform:scaleX(0.88)">K</span>
<span class="abs" style="left:942.5px;top:165px;width:20px;text-align:center;line-height:16px;font-size:13.2px;color:#262626;transform:scaleX(0.88)">L</span>
<span class="abs" style="left:1022.5px;top:165px;width:20px;text-align:center;line-height:16px;font-size:13.2px;color:#262626;transform:scaleX(0.88)">M</span>
<span class="abs" style="left:1102.5px;top:165px;width:20px;text-align:center;line-height:16px;font-size:13.2px;color:#262626;transform:scaleX(0.88)">N</span>
<span class="abs" style="left:1182.5px;top:165px;width:20px;text-align:center;line-height:16px;font-size:13.2px;color:#262626;transform:scaleX(0.88)">O</span>
<span class="abs" style="left:1262.5px;top:165px;width:20px;text-align:center;line-height:16px;font-size:13.2px;color:#262626;transform:scaleX(0.88)">P</span>
<span class="abs" style="left:8.81px;top:183.93px;line-height:19px;white-space:nowrap;font-size:13.2px;font-weight:400;letter-spacing:0.246px;color:#262626">1</span>
<span class="abs" style="left:8.81px;top:203.93px;line-height:19px;white-space:nowrap;font-size:13.2px;font-weight:400;letter-spacing:0.246px;color:#262626">2</span>
<span class="abs" style="left:8.81px;top:223.93px;line-height:19px;white-space:nowrap;font-size:13.2px;font-weight:400;letter-spacing:0.246px;color:#2a6045">3</span>
<span class="abs" style="left:8.81px;top:243.93px;line-height:19px;white-space:nowrap;font-size:13.2px;font-weight:400;letter-spacing:0.246px;color:#262626">4</span>
<span class="abs" style="left:8.81px;top:263.93px;line-height:19px;white-space:nowrap;font-size:13.2px;font-weight:400;letter-spacing:0.246px;color:#262626">5</span>
<span class="abs" style="left:8.81px;top:283.93px;line-height:19px;white-space:nowrap;font-size:13.2px;font-weight:400;letter-spacing:0.246px;color:#262626">6</span>
<span class="abs" style="left:8.81px;top:303.93px;line-height:19px;white-space:nowrap;font-size:13.2px;font-weight:400;letter-spacing:0.246px;color:#262626">7</span>
<span class="abs" style="left:8.81px;top:323.93px;line-height:19px;white-space:nowrap;font-size:13.2px;font-weight:400;letter-spacing:0.246px;color:#262626">8</span>
<span class="abs" style="left:8.81px;top:343.93px;line-height:19px;white-space:nowrap;font-size:13.2px;font-weight:400;letter-spacing:0.246px;color:#262626">9</span>
<span class="abs" style="left:5.37px;top:363.93px;line-height:19px;white-space:nowrap;font-size:13.2px;font-weight:400;letter-spacing:-0.212px;color:#262626">10</span>
<span class="abs" style="left:5.37px;top:383.93px;line-height:19px;white-space:nowrap;font-size:13.2px;font-weight:400;letter-spacing:0.757px;color:#262626">11</span>
<span class="abs" style="left:5.37px;top:403.93px;line-height:19px;white-space:nowrap;font-size:13.2px;font-weight:400;letter-spacing:-0.212px;color:#262626">12</span>
<span class="abs" style="left:5.37px;top:423.93px;line-height:19px;white-space:nowrap;font-size:13.2px;font-weight:400;letter-spacing:-0.212px;color:#262626">13</span>
<span class="abs" style="left:5.37px;top:443.93px;line-height:19px;white-space:nowrap;font-size:13.2px;font-weight:400;letter-spacing:-0.212px;color:#262626">14</span>
<span class="abs" style="left:5.37px;top:463.93px;line-height:19px;white-space:nowrap;font-size:13.2px;font-weight:400;letter-spacing:-0.212px;color:#262626">15</span>
<span class="abs" style="left:5.37px;top:483.93px;line-height:19px;white-space:nowrap;font-size:13.2px;font-weight:400;letter-spacing:-0.212px;color:#262626">16</span>
<span class="abs" style="left:5.37px;top:503.93px;line-height:19px;white-space:nowrap;font-size:13.2px;font-weight:400;letter-spacing:-0.212px;color:#262626">17</span>
<span class="abs" style="left:5.37px;top:523.93px;line-height:19px;white-space:nowrap;font-size:13.2px;font-weight:400;letter-spacing:-0.212px;color:#262626">18</span>
<span class="abs" style="left:5.37px;top:543.93px;line-height:19px;white-space:nowrap;font-size:13.2px;font-weight:400;letter-spacing:-0.212px;color:#262626">19</span>
<span class="abs" style="left:5.37px;top:563.93px;line-height:19px;white-space:nowrap;font-size:13.2px;font-weight:400;letter-spacing:-0.212px;color:#262626">20</span>
<span class="abs" style="left:5.37px;top:583.93px;line-height:19px;white-space:nowrap;font-size:13.2px;font-weight:400;letter-spacing:-0.212px;color:#262626">21</span>
<span class="abs" style="left:5.37px;top:603.93px;line-height:19px;white-space:nowrap;font-size:13.2px;font-weight:400;letter-spacing:-0.212px;color:#262626">22</span>
<span class="abs" style="left:5.37px;top:623.93px;line-height:19px;white-space:nowrap;font-size:13.2px;font-weight:400;letter-spacing:-0.212px;color:#262626">23</span>
<div class="abs" style="left:198px;top:223px;width:314px;height:19px;background:#ddebf7"></div>
<div class="abs" style="left:198px;top:242px;width:314px;height:1px;background:#9dc3e6"></div>
<div class="abs" style="left:198px;top:262px;width:314px;height:1px;background:#9dc3e6"></div>
<div class="abs" style="left:198px;top:263px;width:314px;height:19px;background:#ddebf7"></div>
<div class="abs" style="left:198px;top:282px;width:314px;height:1px;background:#9dc3e6"></div>
<div class="abs" style="left:198px;top:302px;width:314px;height:1px;background:#9dc3e6"></div>
<div class="abs" style="left:198px;top:303px;width:314px;height:19px;background:#ddebf7"></div>
<div class="abs" style="left:198px;top:322px;width:314px;height:1px;background:#9dc3e6"></div>
<div class="abs" style="left:198px;top:342px;width:314px;height:1px;background:#9dc3e6"></div>
<div class="abs" style="left:198px;top:343px;width:314px;height:19px;background:#ddebf7"></div>
<div class="abs" style="left:198px;top:362px;width:314px;height:1px;background:#9dc3e6"></div>
<div class="abs" style="left:198px;top:382px;width:314px;height:1px;background:#9dc3e6"></div>
<div class="abs" style="left:198px;top:383px;width:314px;height:19px;background:#ddebf7"></div>
<div class="abs" style="left:198px;top:402px;width:314px;height:1px;background:#9dc3e6"></div>
<div class="abs" style="left:198px;top:422px;width:314px;height:1px;background:#9dc3e6"></div>
<div class="abs" style="left:198px;top:423px;width:314px;height:19px;background:#ddebf7"></div>
<div class="abs" style="left:198px;top:442px;width:314px;height:1px;background:#9dc3e6"></div>
<div class="abs" style="left:284px;top:223px;width:1px;height:19px;background:#d3e0ec"></div>
<div class="abs" style="left:284px;top:263px;width:1px;height:19px;background:#d3e0ec"></div>
<div class="abs" style="left:284px;top:303px;width:1px;height:19px;background:#d3e0ec"></div>
<div class="abs" style="left:284px;top:343px;width:1px;height:19px;background:#d3e0ec"></div>
<div class="abs" style="left:284px;top:383px;width:1px;height:19px;background:#d3e0ec"></div>
<div class="abs" style="left:284px;top:423px;width:1px;height:19px;background:#d3e0ec"></div>
<div class="abs" style="left:364px;top:223px;width:1px;height:19px;background:#d3e0ec"></div>
<div class="abs" style="left:364px;top:263px;width:1px;height:19px;background:#d3e0ec"></div>
<div class="abs" style="left:364px;top:303px;width:1px;height:19px;background:#d3e0ec"></div>
<div class="abs" style="left:364px;top:343px;width:1px;height:19px;background:#d3e0ec"></div>
<div class="abs" style="left:364px;top:383px;width:1px;height:19px;background:#d3e0ec"></div>
<div class="abs" style="left:364px;top:423px;width:1px;height:19px;background:#d3e0ec"></div>
<div class="abs" style="left:444px;top:223px;width:1px;height:19px;background:#d3e0ec"></div>
<div class="abs" style="left:444px;top:263px;width:1px;height:19px;background:#d3e0ec"></div>
<div class="abs" style="left:444px;top:303px;width:1px;height:19px;background:#d3e0ec"></div>
<div class="abs" style="left:444px;top:343px;width:1px;height:19px;background:#d3e0ec"></div>
<div class="abs" style="left:444px;top:383px;width:1px;height:19px;background:#d3e0ec"></div>
<div class="abs" style="left:444px;top:423px;width:1px;height:19px;background:#d3e0ec"></div>
<div class="abs" style="left:198px;top:203px;width:314px;height:20px;background:#5b9bd5"></div>
<span class="abs" style="left:199.74px;top:203.93px;line-height:19px;white-space:nowrap;font-size:13.2px;font-weight:700;letter-spacing:-0.134px;color:#fff">Spalte1</span>
<span class="abs" style="left:286.94px;top:203.93px;line-height:19px;white-space:nowrap;font-size:13.2px;font-weight:700;letter-spacing:-0.1px;color:#fff">Spalte2</span>
<span class="abs" style="left:366.84px;top:203.93px;line-height:19px;white-space:nowrap;font-size:13.2px;font-weight:700;letter-spacing:-0.067px;color:#fff">Spalte3</span>
<span class="abs" style="left:455.34px;top:203.93px;line-height:19px;white-space:nowrap;font-size:13.2px;font-weight:700;letter-spacing:-0.012px;color:#fff">Spalte</span>
<div class="abs" style="left:268px;top:205px;width:16px;height:16px;background:#fdfdfd;border:1px solid #c9d3de"></div>
<svg class="abs" style="left:268px;top:205px" width="16" height="16" viewBox="0 0 16 16"><path d="M4.300 6.400h7.400l-3.700 4z" fill="#595959"/></svg>
<div class="abs" style="left:348px;top:205px;width:16px;height:16px;background:#fdfdfd;border:1px solid #c9d3de"></div>
<svg class="abs" style="left:348px;top:205px" width="16" height="16" viewBox="0 0 16 16"><path d="M4.300 6.400h7.400l-3.700 4z" fill="#595959"/></svg>
<div class="abs" style="left:428px;top:205px;width:16px;height:16px;background:#fdfdfd;border:1px solid #c9d3de"></div>
<svg class="abs" style="left:428px;top:205px" width="16" height="16" viewBox="0 0 16 16"><path d="M2.800 8.800h5l-2.500 2.800z" fill="#595959"/><path d="M11 12.500V4M9.300 5.800L11 3.800l1.700 2" stroke="#595959" stroke-width="1" fill="none"/></svg>
<div class="abs" style="left:496px;top:205px;width:16px;height:16px;background:#fdfdfd;border:1px solid #c9d3de"></div>
<svg class="abs" style="left:496px;top:205px" width="16" height="16" viewBox="0 0 16 16"><path d="M4.300 6.400h7.400l-3.700 4z" fill="#595959"/></svg>
<span class="abs" style="left:27.44px;top:183.93px;line-height:19px;white-space:nowrap;font-size:13.2px;font-weight:400;letter-spacing:0.685px;color:#000">Lebensmittel</span>
<span class="abs" style="left:119.34px;top:183.93px;line-height:19px;white-space:nowrap;font-size:13.2px;font-weight:400;letter-spacing:0.454px;color:#000">gesamt</span>
<span class="abs" style="left:199.74px;top:183.93px;line-height:19px;white-space:nowrap;font-size:13.2px;font-weight:400;letter-spacing:0.525px;color:#000">Kostenfaktor</span>
<span class="abs" style="left:286.94px;top:183.93px;line-height:19px;white-space:nowrap;font-size:13.2px;font-weight:400;letter-spacing:0.332px;color:#000">Betrag</span>
<span class="abs" style="left:468.34px;top:183.93px;line-height:19px;white-space:nowrap;font-size:13.2px;font-weight:400;letter-spacing:-0.53px;color:#000">KW</span>
<span class="abs" style="left:76.64px;top:203.93px;line-height:19px;white-space:nowrap;font-size:13.2px;font-weight:400;letter-spacing:-0.365px;color:#000">104,96</span>
<span class="abs" style="left:27.44px;top:223.93px;line-height:19px;white-space:nowrap;font-size:13.2px;font-weight:400;letter-spacing:0.685px;color:#000">Lebensmittel</span>
<span class="abs" style="left:119.34px;top:223.93px;line-height:19px;white-space:nowrap;font-size:13.2px;font-weight:400;letter-spacing:0.442px;color:#000">Einkäufe</span>
<span class="abs" style="left:107.57px;top:243.93px;line-height:19px;white-space:nowrap;font-size:13.2px;font-weight:400;letter-spacing:0.246px;color:#000">4</span>
<span class="abs" style="left:27.44px;top:263.93px;line-height:19px;white-space:nowrap;font-size:13.2px;font-weight:400;letter-spacing:0.685px;color:#000">Lebensmittel</span>
<span class="abs" style="left:119.34px;top:263.93px;line-height:19px;white-space:nowrap;font-size:13.2px;font-weight:400;letter-spacing:1.244px;color:#000">Mittelwert</span>
<span class="abs" style="left:83.51px;top:283.93px;line-height:19px;white-space:nowrap;font-size:13.2px;font-weight:400;letter-spacing:-0.341px;color:#000">26,24</span>
<span class="abs" style="left:199.74px;top:223.93px;line-height:19px;white-space:nowrap;font-size:13.2px;font-weight:400;letter-spacing:1.242px;color:#000">Miete</span>
<span class="abs" style="left:323.44px;top:223.93px;line-height:19px;white-space:nowrap;font-size:13.2px;font-weight:400;letter-spacing:-0.365px;color:#000">600,00</span>
<span class="abs" style="left:378.88px;top:223.93px;line-height:19px;white-space:nowrap;font-size:13.2px;font-weight:400;letter-spacing:-0.272px;color:#000">01.11.2019</span>
<span class="abs" style="left:471.47px;top:223.93px;line-height:19px;white-space:nowrap;font-size:13.2px;font-weight:400;letter-spacing:-0.212px;color:#000">44</span>
<span class="abs" style="left:199.74px;top:243.93px;line-height:19px;white-space:nowrap;font-size:13.2px;font-weight:400;letter-spacing:0.512px;color:#000">Strom</span>
<span class="abs" style="left:330.31px;top:243.93px;line-height:19px;white-space:nowrap;font-size:13.2px;font-weight:400;letter-spacing:-0.341px;color:#000">50,00</span>
<span class="abs" style="left:378.88px;top:243.93px;line-height:19px;white-space:nowrap;font-size:13.2px;font-weight:400;letter-spacing:-0.272px;color:#000">01.11.2019</span>
<span class="abs" style="left:471.47px;top:243.93px;line-height:19px;white-space:nowrap;font-size:13.2px;font-weight:400;letter-spacing:-0.212px;color:#000">44</span>
<span class="abs" style="left:199.74px;top:263.93px;line-height:19px;white-space:nowrap;font-size:13.2px;font-weight:400;letter-spacing:0.685px;color:#000">Lebensmittel</span>
<span class="abs" style="left:330.31px;top:263.93px;line-height:19px;white-space:nowrap;font-size:13.2px;font-weight:400;letter-spacing:-0.341px;color:#000">12,30</span>
<span class="abs" style="left:378.88px;top:263.93px;line-height:19px;white-space:nowrap;font-size:13.2px;font-weight:400;letter-spacing:-0.272px;color:#000">05.11.2019</span>
<span class="abs" style="left:471.47px;top:263.93px;line-height:19px;white-space:nowrap;font-size:13.2px;font-weight:400;letter-spacing:-0.212px;color:#000">45</span>
<span class="abs" style="left:199.74px;top:283.93px;line-height:19px;white-space:nowrap;font-size:13.2px;font-weight:400;letter-spacing:0.574px;color:#000">Sprit</span>
<span class="abs" style="left:330.31px;top:283.93px;line-height:19px;white-space:nowrap;font-size:13.2px;font-weight:400;letter-spacing:-0.341px;color:#000">76,80</span>
<span class="abs" style="left:378.88px;top:283.93px;line-height:19px;white-space:nowrap;font-size:13.2px;font-weight:400;letter-spacing:-0.272px;color:#000">09.11.2019</span>
<span class="abs" style="left:471.47px;top:283.93px;line-height:19px;white-space:nowrap;font-size:13.2px;font-weight:400;letter-spacing:-0.212px;color:#000">45</span>
<span class="abs" style="left:199.74px;top:303.93px;line-height:19px;white-space:nowrap;font-size:13.2px;font-weight:400;letter-spacing:0.685px;color:#000">Lebensmittel</span>
<span class="abs" style="left:330.31px;top:303.93px;line-height:19px;white-space:nowrap;font-size:13.2px;font-weight:400;letter-spacing:-0.341px;color:#000">25,94</span>
<span class="abs" style="left:378.88px;top:303.93px;line-height:19px;white-space:nowrap;font-size:13.2px;font-weight:400;letter-spacing:-0.272px;color:#000">17.11.2019</span>
<span class="abs" style="left:471.47px;top:303.93px;line-height:19px;white-space:nowrap;font-size:13.2px;font-weight:400;letter-spacing:-0.212px;color:#000">46</span>
<span class="abs" style="left:199.74px;top:323.93px;line-height:19px;white-space:nowrap;font-size:13.2px;font-weight:400;letter-spacing:0.453px;color:#000">Sozialleben</span>
<span class="abs" style="left:330.31px;top:323.93px;line-height:19px;white-space:nowrap;font-size:13.2px;font-weight:400;letter-spacing:-0.341px;color:#000">13,50</span>
<span class="abs" style="left:378.88px;top:323.93px;line-height:19px;white-space:nowrap;font-size:13.2px;font-weight:400;letter-spacing:-0.272px;color:#000">20.11.2019</span>
<span class="abs" style="left:471.47px;top:323.93px;line-height:19px;white-space:nowrap;font-size:13.2px;font-weight:400;letter-spacing:-0.212px;color:#000">47</span>
<span class="abs" style="left:199.74px;top:343.93px;line-height:19px;white-space:nowrap;font-size:13.2px;font-weight:400;letter-spacing:0.685px;color:#000">Lebensmittel</span>
<span class="abs" style="left:330.31px;top:343.93px;line-height:19px;white-space:nowrap;font-size:13.2px;font-weight:400;letter-spacing:-0.341px;color:#000">45,20</span>
<span class="abs" style="left:378.88px;top:343.93px;line-height:19px;white-space:nowrap;font-size:13.2px;font-weight:400;letter-spacing:-0.272px;color:#000">22.11.2019</span>
<span class="abs" style="left:471.47px;top:343.93px;line-height:19px;white-space:nowrap;font-size:13.2px;font-weight:400;letter-spacing:-0.212px;color:#000">47</span>
<span class="abs" style="left:199.74px;top:363.93px;line-height:19px;white-space:nowrap;font-size:13.2px;font-weight:400;letter-spacing:1.242px;color:#000">Miete</span>
<span class="abs" style="left:323.44px;top:363.93px;line-height:19px;white-space:nowrap;font-size:13.2px;font-weight:400;letter-spacing:-0.365px;color:#000">600,00</span>
<span class="abs" style="left:378.88px;top:363.93px;line-height:19px;white-space:nowrap;font-size:13.2px;font-weight:400;letter-spacing:-0.382px;color:#000">01.12.2019</span>
<span class="abs" style="left:471.47px;top:363.93px;line-height:19px;white-space:nowrap;font-size:13.2px;font-weight:400;letter-spacing:-0.212px;color:#000">48</span>
<span class="abs" style="left:199.74px;top:383.93px;line-height:19px;white-space:nowrap;font-size:13.2px;font-weight:400;letter-spacing:0.512px;color:#000">Strom</span>
<span class="abs" style="left:330.31px;top:383.93px;line-height:19px;white-space:nowrap;font-size:13.2px;font-weight:400;letter-spacing:-0.341px;color:#000">50,00</span>
<span class="abs" style="left:378.88px;top:383.93px;line-height:19px;white-space:nowrap;font-size:13.2px;font-weight:400;letter-spacing:-0.382px;color:#000">01.12.2019</span>
<span class="abs" style="left:471.47px;top:383.93px;line-height:19px;white-space:nowrap;font-size:13.2px;font-weight:400;letter-spacing:-0.212px;color:#000">48</span>
<span class="abs" style="left:199.74px;top:403.93px;line-height:19px;white-space:nowrap;font-size:13.2px;font-weight:400;letter-spacing:0.453px;color:#000">Sozialleben</span>
<span class="abs" style="left:330.31px;top:403.93px;line-height:19px;white-space:nowrap;font-size:13.2px;font-weight:400;letter-spacing:-0.341px;color:#000">14,70</span>
<span class="abs" style="left:378.88px;top:403.93px;line-height:19px;white-space:nowrap;font-size:13.2px;font-weight:400;letter-spacing:-0.382px;color:#000">05.12.2019</span>
<span class="abs" style="left:471.47px;top:403.93px;line-height:19px;white-space:nowrap;font-size:13.2px;font-weight:400;letter-spacing:-0.212px;color:#000">49</span>
<span class="abs" style="left:199.74px;top:423.93px;line-height:19px;white-space:nowrap;font-size:13.2px;font-weight:400;letter-spacing:0.685px;color:#000">Lebensmittel</span>
<span class="abs" style="left:330.31px;top:423.93px;line-height:19px;white-space:nowrap;font-size:13.2px;font-weight:400;letter-spacing:-0.341px;color:#000">21,52</span>
<span class="abs" style="left:378.88px;top:423.93px;line-height:19px;white-space:nowrap;font-size:13.2px;font-weight:400;letter-spacing:-0.382px;color:#000">09.12.2019</span>
<span class="abs" style="left:471.47px;top:423.93px;line-height:19px;white-space:nowrap;font-size:13.2px;font-weight:400;letter-spacing:-0.212px;color:#000">50</span>
<span class="abs" style="left:199.74px;top:483.93px;line-height:19px;white-space:nowrap;font-size:13.2px;font-weight:400;letter-spacing:0.496px;color:#000">Summe</span>
<span class="abs" style="left:316.57px;top:483.93px;line-height:19px;white-space:nowrap;font-size:13.2px;font-weight:400;letter-spacing:-0.38px;color:#000">1509,96</span>
<div class="abs" style="left:444px;top:221px;width:70px;height:23px;border:2px solid #217346"></div>
<div class="abs" style="left:509px;top:239px;width:7px;height:7px;background:#217346;border:1px solid #fff"></div>
<svg class="abs" style="left:507px;top:437px" width="5" height="5" viewBox="0 0 5 5"><path d="M4.700 0.300V4.700H0.300z" fill="#44546a"/></svg>
<div class="abs" style="left:539px;top:241px;width:724px;height:338px;background:#fff;border:1px solid #d4d4d4"></div>
<svg class="abs" style="left:539px;top:241px" width="724" height="338" viewBox="539 241 724 338">
<defs>
<linearGradient id="sg0" x1="0" y1="0" x2="1" y2="0"><stop offset="0" stop-color="#27435e"/><stop offset="1" stop-color="#223b55"/></linearGradient>
<linearGradient id="sg1" x1="0" y1="0" x2="1" y2="0"><stop offset="0" stop-color="#753815"/><stop offset="1" stop-color="#683211"/></linearGradient>
<linearGradient id="sg2" x1="0" y1="0" x2="1" y2="0"><stop offset="0" stop-color="#525252"/><stop offset="1" stop-color="#474747"/></linearGradient>
<linearGradient id="sg3" x1="0" y1="0" x2="1" y2="0"><stop offset="0" stop-color="#9a7300"/><stop offset="1" stop-color="#7b5b00"/></linearGradient>
<linearGradient id="sg4" x1="0" y1="0" x2="1" y2="0"><stop offset="0" stop-color="#2a4880"/><stop offset="1" stop-color="#26417a"/></linearGradient>
<linearGradient id="sg5" x1="0" y1="0" x2="1" y2="0"><stop offset="0" stop-color="#46792b"/><stop offset="1" stop-color="#41722a"/></linearGradient>
<linearGradient id="sg6" x1="0" y1="0" x2="1" y2="0"><stop offset="0" stop-color="#1c4670"/><stop offset="1" stop-color="#173c60"/></linearGradient>
<linearGradient id="sg7" x1="0" y1="0" x2="1" y2="0"><stop offset="0" stop-color="#8a3f0c"/><stop offset="1" stop-color="#703309"/></linearGradient>
<linearGradient id="sg8" x1="0" y1="0" x2="1" y2="0"><stop offset="0" stop-color="#444"/><stop offset="1" stop-color="#333"/></linearGradient>
<linearGradient id="sg9" x1="0" y1="0" x2="1" y2="0"><stop offset="0" stop-color="#665000"/><stop offset="1" stop-color="#554000"/></linearGradient>
<linearGradient id="sg10" x1="0" y1="0" x2="1" y2="0"><stop offset="0" stop-color="#1a2e52"/><stop offset="1" stop-color="#14233f"/></linearGradient>
</defs>
<polygon points="1101.3,387.4 1101.3,389.3 1101.1,391.2 1100.9,393.1 1100.6,395.0 1100.3,396.9 1099.8,398.8 1099.3,400.7 1098.7,402.6 1098.0,404.5 1097.2,406.3 1096.4,408.2 1095.4,410.1 1094.4,411.9 1093.3,413.7 1092.2,415.6 1090.9,417.4 1089.6,419.2 1088.2,421.0 1086.7,422.7 1085.2,424.5 1083.5,426.3 1081.8,428.0 1080.0,429.7 1078.2,431.4 1076.3,433.1 1074.3,434.7 1072.2,436.4 1070.1,438.0 1067.9,439.6 1065.6,441.2 1063.2,442.7 1060.8,444.3 1058.4,445.8 1055.8,447.3 1053.2,448.7 1050.6,450.2 1047.8,451.6 1045.0,453.0 1042.2,454.3 1039.3,455.7 1036.5,500.5 1039.4,499.1 1042.2,497.7 1044.9,496.2 1047.6,494.7 1050.2,493.2 1052.7,491.7 1055.2,490.1 1057.6,488.5 1060.0,486.9 1062.3,485.2 1064.5,483.5 1066.7,481.8 1068.8,480.1 1070.8,478.4 1072.8,476.6 1074.6,474.9 1076.5,473.1 1078.2,471.2 1079.9,469.4 1081.5,467.6 1083.0,465.7 1084.4,463.8 1085.8,461.9 1087.1,460.0 1088.3,458.1 1089.5,456.2 1090.6,454.2 1091.6,452.3 1092.5,450.3 1093.3,448.3 1094.1,446.4 1094.7,444.4 1095.3,442.4 1095.9,440.4 1096.3,438.4 1096.7,436.4 1096.9,434.3 1097.1,432.3 1097.3,430.3 1097.3,428.3" fill="url(#sg0)" stroke="#e8e8e8" stroke-width="0.6" stroke-linejoin="round"/>
<polygon points="1039.3,455.7 1038.4,456.1 1037.5,456.4 1036.7,456.8 1035.8,457.2 1034.9,457.6 1034.0,458.0 1033.1,458.3 1032.2,458.7 1031.2,459.1 1030.3,459.5 1029.4,459.8 1028.5,460.2 1027.5,460.6 1026.6,460.9 1025.7,461.3 1024.7,461.6 1023.8,462.0 1022.8,462.3 1021.8,462.7 1020.9,463.0 1019.9,463.3 1018.9,463.7 1017.9,464.0 1017.0,464.4 1016.0,464.7 1015.0,465.0 1014.0,465.3 1013.0,465.7 1012.0,466.0 1011.0,466.3 1010.0,466.6 1009.0,466.9 1007.9,467.2 1006.9,467.5 1005.9,467.8 1004.9,468.1 1003.8,468.4 1002.8,468.7 1001.7,469.0 1000.7,469.3 998.7,514.9 999.7,514.6 1000.7,514.3 1001.8,514.0 1002.8,513.7 1003.8,513.4 1004.8,513.1 1005.8,512.8 1006.8,512.4 1007.8,512.1 1008.8,511.8 1009.8,511.4 1010.8,511.1 1011.7,510.8 1012.7,510.4 1013.7,510.1 1014.6,509.7 1015.6,509.4 1016.6,509.0 1017.5,508.7 1018.5,508.3 1019.4,507.9 1020.4,507.6 1021.3,507.2 1022.2,506.8 1023.2,506.5 1024.1,506.1 1025.0,505.7 1025.9,505.3 1026.8,504.9 1027.7,504.6 1028.6,504.2 1029.5,503.8 1030.4,503.4 1031.3,503.0 1032.2,502.6 1033.1,502.2 1033.9,501.8 1034.8,501.4 1035.7,500.9 1036.5,500.5" fill="url(#sg1)" stroke="#e8e8e8" stroke-width="0.6" stroke-linejoin="round"/>
<polygon points="1000.7,469.3 1000.4,469.3 1000.2,469.4 999.9,469.5 999.7,469.5 999.4,469.6 999.2,469.7 998.9,469.7 998.6,469.8 998.4,469.9 998.1,470.0 997.9,470.0 997.6,470.1 997.4,470.2 997.1,470.2 996.8,470.3 996.6,470.4 996.3,470.4 996.1,470.5 995.8,470.6 995.5,470.6 995.3,470.7 995.0,470.7 994.8,470.8 994.5,470.9 994.2,470.9 994.0,471.0 993.7,471.1 993.5,471.1 993.2,471.2 992.9,471.3 992.7,471.3 992.4,471.4 992.2,471.5 991.9,471.5 991.6,471.6 991.4,471.6 991.1,471.7 990.8,471.8 990.6,471.8 990.3,471.9 988.5,517.7 988.8,517.6 989.0,517.6 989.3,517.5 989.6,517.4 989.8,517.4 990.1,517.3 990.3,517.2 990.6,517.2 990.8,517.1 991.1,517.0 991.4,517.0 991.6,516.9 991.9,516.8 992.1,516.8 992.4,516.7 992.6,516.6 992.9,516.6 993.1,516.5 993.4,516.4 993.7,516.4 993.9,516.3 994.2,516.2 994.4,516.2 994.7,516.1 994.9,516.0 995.2,515.9 995.4,515.9 995.7,515.8 995.9,515.7 996.2,515.7 996.4,515.6 996.7,515.5 996.9,515.4 997.2,515.4 997.4,515.3 997.7,515.2 997.9,515.2 998.2,515.1 998.4,515.0 998.7,514.9" fill="url(#sg2)" stroke="#e8e8e8" stroke-width="0.6" stroke-linejoin="round"/>
<polygon points="990.3,471.9 988.6,472.3 986.8,472.7 985.0,473.1 983.3,473.5 981.5,473.8 979.7,474.2 977.9,474.6 976.1,474.9 974.3,475.3 972.5,475.6 970.7,475.9 968.8,476.2 967.0,476.5 965.1,476.8 963.3,477.1 961.4,477.4 959.6,477.7 957.7,478.0 955.8,478.2 954.0,478.5 952.1,478.7 950.2,478.9 948.3,479.2 946.4,479.4 944.5,479.6 942.6,479.8 940.7,480.0 938.8,480.2 936.9,480.3 934.9,480.5 933.0,480.6 931.1,480.8 929.2,480.9 927.2,481.0 925.3,481.2 923.4,481.3 921.4,481.4 919.5,481.5 917.5,481.6 915.6,481.6 915.3,528.0 917.2,527.9 919.1,527.8 921.0,527.7 922.9,527.6 924.8,527.5 926.7,527.4 928.6,527.3 930.5,527.1 932.4,527.0 934.2,526.8 936.1,526.6 938.0,526.5 939.9,526.3 941.8,526.1 943.6,525.9 945.5,525.6 947.3,525.4 949.2,525.2 951.0,524.9 952.9,524.7 954.7,524.4 956.6,524.1 958.4,523.9 960.2,523.6 962.0,523.3 963.9,523.0 965.7,522.6 967.5,522.3 969.3,522.0 971.0,521.6 972.8,521.3 974.6,520.9 976.4,520.5 978.1,520.2 979.9,519.8 981.6,519.4 983.4,519.0 985.1,518.6 986.8,518.1 988.5,517.7" fill="url(#sg3)" stroke="#e8e8e8" stroke-width="0.6" stroke-linejoin="round"/>
<polygon points="915.6,481.6 915.0,481.6 914.3,481.7 913.7,481.7 913.1,481.7 912.4,481.7 911.8,481.7 911.2,481.8 910.5,481.8 909.9,481.8 909.3,481.8 908.6,481.8 908.0,481.8 907.4,481.8 906.7,481.9 906.1,481.9 905.4,481.9 904.8,481.9 904.2,481.9 903.5,481.9 902.9,481.9 902.3,481.9 901.6,481.9 901.0,481.9 900.4,481.9 899.7,481.9 899.1,481.9 898.5,481.9 897.8,481.9 897.2,481.9 896.6,481.9 895.9,481.9 895.3,481.9 894.7,481.9 894.0,481.9 893.4,481.8 892.8,481.8 892.1,481.8 891.5,481.8 890.9,481.8 890.2,481.8 890.4,528.2 891.0,528.2 891.7,528.2 892.3,528.2 892.9,528.2 893.5,528.2 894.2,528.3 894.8,528.3 895.4,528.3 896.0,528.3 896.6,528.3 897.3,528.3 897.9,528.3 898.5,528.3 899.1,528.3 899.7,528.3 900.4,528.3 901.0,528.3 901.6,528.3 902.2,528.3 902.9,528.3 903.5,528.3 904.1,528.3 904.7,528.3 905.3,528.3 906.0,528.3 906.6,528.2 907.2,528.2 907.8,528.2 908.5,528.2 909.1,528.2 909.7,528.2 910.3,528.2 910.9,528.2 911.6,528.1 912.2,528.1 912.8,528.1 913.4,528.1 914.0,528.1 914.7,528.0 915.3,528.0" fill="url(#sg4)" stroke="#e8e8e8" stroke-width="0.6" stroke-linejoin="round"/>
<polygon points="890.2,481.8 889.9,481.8 889.6,481.8 889.3,481.8 888.9,481.7 888.6,481.7 888.3,481.7 888.0,481.7 887.7,481.7 887.4,481.7 887.0,481.7 886.7,481.7 886.4,481.7 886.1,481.7 885.8,481.7 885.4,481.6 885.1,481.6 884.8,481.6 884.5,481.6 884.2,481.6 883.8,481.6 883.5,481.6 883.2,481.6 882.9,481.5 882.6,481.5 882.2,481.5 881.9,481.5 881.6,481.5 881.3,481.5 881.0,481.5 880.7,481.4 880.3,481.4 880.0,481.4 879.7,481.4 879.4,481.4 879.1,481.4 878.7,481.4 878.4,481.3 878.1,481.3 877.8,481.3 877.5,481.3 877.9,527.7 878.2,527.7 878.6,527.7 878.9,527.7 879.2,527.7 879.5,527.7 879.8,527.8 880.1,527.8 880.4,527.8 880.7,527.8 881.0,527.8 881.4,527.8 881.7,527.9 882.0,527.9 882.3,527.9 882.6,527.9 882.9,527.9 883.2,527.9 883.5,527.9 883.9,528.0 884.2,528.0 884.5,528.0 884.8,528.0 885.1,528.0 885.4,528.0 885.7,528.0 886.0,528.0 886.4,528.0 886.7,528.1 887.0,528.1 887.3,528.1 887.6,528.1 887.9,528.1 888.2,528.1 888.5,528.1 888.9,528.1 889.2,528.1 889.5,528.1 889.8,528.2 890.1,528.2 890.4,528.2" fill="url(#sg5)" stroke="#e8e8e8" stroke-width="0.6" stroke-linejoin="round"/>
<polygon points="877.5,481.3 876.3,481.2 875.2,481.2 874.0,481.1 872.9,481.0 871.8,480.9 870.6,480.9 869.5,480.8 868.3,480.7 867.2,480.6 866.1,480.5 864.9,480.4 863.8,480.3 862.7,480.2 861.5,480.1 860.4,480.0 859.3,479.9 858.2,479.8 857.0,479.7 855.9,479.6 854.8,479.4 853.7,479.3 852.5,479.2 851.4,479.1 850.3,478.9 849.2,478.8 848.1,478.7 847.0,478.5 845.9,478.4 844.8,478.2 843.6,478.1 842.5,477.9 841.4,477.8 840.3,477.6 839.2,477.4 838.1,477.3 837.1,477.1 836.0,476.9 834.9,476.8 833.8,476.6 832.7,476.4 834.0,522.5 835.1,522.7 836.2,522.9 837.2,523.0 838.3,523.2 839.4,523.4 840.5,523.6 841.5,523.7 842.6,523.9 843.7,524.1 844.8,524.2 845.9,524.4 846.9,524.6 848.0,524.7 849.1,524.9 850.2,525.0 851.3,525.2 852.4,525.3 853.5,525.4 854.6,525.6 855.7,525.7 856.8,525.8 857.9,526.0 859.0,526.1 860.1,526.2 861.2,526.3 862.3,526.4 863.4,526.5 864.5,526.6 865.6,526.7 866.8,526.8 867.9,526.9 869.0,527.0 870.1,527.1 871.2,527.2 872.3,527.3 873.5,527.4 874.6,527.4 875.7,527.5 876.8,527.6 877.9,527.7" fill="url(#sg6)" stroke="#e8e8e8" stroke-width="0.6" stroke-linejoin="round"/>
<polygon points="832.7,476.4 826.9,475.4 821.2,474.3 815.6,473.1 810.0,471.8 804.6,470.5 799.2,469.1 793.9,467.6 788.7,466.0 783.6,464.4 778.7,462.6 773.8,460.8 769.1,459.0 764.5,457.1 760.0,455.1 755.6,453.0 751.4,450.9 747.3,448.7 743.4,446.5 739.6,444.2 736.0,441.8 732.5,439.4 729.2,437.0 726.0,434.5 723.1,432.0 720.2,429.4 717.6,426.8 715.1,424.1 712.8,421.4 710.6,418.7 708.7,416.0 706.9,413.2 705.3,410.4 703.9,407.5 702.7,404.7 701.7,401.8 700.8,399.0 700.2,396.1 699.7,393.2 699.4,390.3 699.3,387.4 703.3,428.3 703.4,431.4 703.7,434.4 704.1,437.5 704.8,440.5 705.6,443.6 706.6,446.6 707.8,449.6 709.2,452.6 710.8,455.6 712.5,458.5 714.4,461.4 716.5,464.3 718.8,467.2 721.2,470.0 723.8,472.7 726.6,475.5 729.5,478.1 732.6,480.8 735.9,483.4 739.3,485.9 742.8,488.4 746.5,490.8 750.4,493.2 754.4,495.5 758.5,497.7 762.8,499.9 767.2,502.0 771.7,504.0 776.3,506.0 781.1,507.9 786.0,509.7 790.9,511.5 796.0,513.1 801.2,514.7 806.5,516.2 811.8,517.6 817.3,519.0 822.8,520.2 828.4,521.4 834.0,522.5" fill="url(#sg7)" stroke="#e8e8e8" stroke-width="0.6" stroke-linejoin="round"/>
<polygon points="900.3,369.8 900.3,292.9 908.3,293.0 916.2,293.2 924.1,293.6 932.0,294.1 939.9,294.7 947.6,295.6 955.4,296.5 963.0,297.6 970.5,298.8 977.9,300.2 985.2,301.7 992.3,303.4 999.3,305.2 1006.2,307.1 1012.9,309.1 1019.4,311.3 1025.7,313.5 1031.8,315.9 1037.8,318.4 1043.5,321.1 1048.9,323.8 1054.2,326.6 1059.2,329.5 1063.9,332.5 1068.4,335.6 1072.7,338.8 1076.6,342.0 1080.3,345.4 1083.7,348.7 1086.8,352.2 1089.6,355.7 1092.2,359.2 1094.4,362.8 1096.3,366.5 1097.9,370.1 1099.2,373.8 1100.2,377.6 1100.9,381.3 1101.2,385.0 1101.3,388.8 1101.0,392.5 1100.4,396.2 1099.5,400.0 1098.3,403.7 1096.8,407.3 1094.9,411.0 1092.8,414.6 1090.4,418.2 1087.6,421.7 1084.6,425.1 1081.3,428.5 1077.6,431.9 1073.8,435.1 1069.6,438.3 1065.2,441.5 1060.5,444.5 1055.5,447.4 1050.4,450.3 1044.9,453.0 1039.3,455.7" fill="#5b9bd5" stroke="#fff" stroke-opacity="0.75" stroke-width="0.6" stroke-linejoin="round"/>
<polygon points="900.3,369.8 1039.3,455.7 1038.7,455.9 1038.1,456.2 1037.5,456.4 1037.0,456.7 1036.4,457.0 1035.8,457.2 1035.2,457.5 1034.6,457.7 1034.0,458.0 1033.4,458.2 1032.8,458.5 1032.2,458.7 1031.5,459.0 1030.9,459.2 1030.3,459.5 1029.7,459.7 1029.1,460.0 1028.5,460.2 1027.8,460.4 1027.2,460.7 1026.6,460.9 1026.0,461.2 1025.3,461.4 1024.7,461.6 1024.1,461.9 1023.4,462.1 1022.8,462.3 1022.2,462.6 1021.5,462.8 1020.9,463.0 1020.2,463.2 1019.6,463.5 1018.9,463.7 1018.3,463.9 1017.6,464.1 1017.0,464.4 1016.3,464.6 1015.6,464.8 1015.0,465.0 1014.3,465.2 1013.7,465.4 1013.0,465.7 1012.3,465.9 1011.7,466.1 1011.0,466.3 1010.3,466.5 1009.6,466.7 1009.0,466.9 1008.3,467.1 1007.6,467.3 1006.9,467.5 1006.2,467.7 1005.5,467.9 1004.9,468.1 1004.2,468.3 1003.5,468.5 1002.8,468.7 1002.1,468.9 1001.4,469.1 1000.7,469.3" fill="#ed7d31" stroke="#fff" stroke-opacity="0.75" stroke-width="0.6" stroke-linejoin="round"/>
<polygon points="900.3,369.8 1000.7,469.3 1000.5,469.3 1000.4,469.4 1000.2,469.4 1000.0,469.5 999.8,469.5 999.7,469.5 999.5,469.6 999.3,469.6 999.2,469.7 999.0,469.7 998.8,469.8 998.6,469.8 998.5,469.9 998.3,469.9 998.1,470.0 998.0,470.0 997.8,470.0 997.6,470.1 997.4,470.1 997.3,470.2 997.1,470.2 996.9,470.3 996.8,470.3 996.6,470.4 996.4,470.4 996.2,470.4 996.1,470.5 995.9,470.5 995.7,470.6 995.5,470.6 995.4,470.7 995.2,470.7 995.0,470.7 994.9,470.8 994.7,470.8 994.5,470.9 994.3,470.9 994.2,471.0 994.0,471.0 993.8,471.0 993.6,471.1 993.5,471.1 993.3,471.2 993.1,471.2 992.9,471.3 992.8,471.3 992.6,471.3 992.4,471.4 992.2,471.4 992.1,471.5 991.9,471.5 991.7,471.6 991.5,471.6 991.4,471.6 991.2,471.7 991.0,471.7 990.8,471.8 990.7,471.8 990.5,471.9 990.3,471.9" fill="#a5a5a5" stroke="#fff" stroke-opacity="0.75" stroke-width="0.6" stroke-linejoin="round"/>
<polygon points="900.3,369.8 990.3,471.9 989.2,472.2 988.0,472.4 986.8,472.7 985.6,473.0 984.5,473.2 983.3,473.5 982.1,473.7 980.9,474.0 979.7,474.2 978.5,474.5 977.3,474.7 976.1,474.9 974.9,475.2 973.7,475.4 972.5,475.6 971.3,475.8 970.0,476.0 968.8,476.2 967.6,476.4 966.4,476.6 965.1,476.8 963.9,477.0 962.7,477.2 961.4,477.4 960.2,477.6 959.0,477.8 957.7,478.0 956.5,478.1 955.2,478.3 954.0,478.5 952.7,478.6 951.5,478.8 950.2,478.9 948.9,479.1 947.7,479.2 946.4,479.4 945.1,479.5 943.9,479.7 942.6,479.8 941.3,479.9 940.0,480.0 938.8,480.2 937.5,480.3 936.2,480.4 934.9,480.5 933.7,480.6 932.4,480.7 931.1,480.8 929.8,480.9 928.5,481.0 927.2,481.0 925.9,481.1 924.6,481.2 923.4,481.3 922.1,481.3 920.8,481.4 919.5,481.5 918.2,481.5 916.9,481.6 915.6,481.6" fill="#ffc000" stroke="#fff" stroke-opacity="0.75" stroke-width="0.6" stroke-linejoin="round"/>
<polygon points="900.3,369.8 915.6,481.6 915.2,481.6 914.7,481.7 914.3,481.7 913.9,481.7 913.5,481.7 913.1,481.7 912.6,481.7 912.2,481.7 911.8,481.7 911.4,481.8 910.9,481.8 910.5,481.8 910.1,481.8 909.7,481.8 909.3,481.8 908.8,481.8 908.4,481.8 908.0,481.8 907.6,481.8 907.1,481.8 906.7,481.9 906.3,481.9 905.9,481.9 905.4,481.9 905.0,481.9 904.6,481.9 904.2,481.9 903.8,481.9 903.3,481.9 902.9,481.9 902.5,481.9 902.1,481.9 901.6,481.9 901.2,481.9 900.8,481.9 900.4,481.9 899.9,481.9 899.5,481.9 899.1,481.9 898.7,481.9 898.3,481.9 897.8,481.9 897.4,481.9 897.0,481.9 896.6,481.9 896.1,481.9 895.7,481.9 895.3,481.9 894.9,481.9 894.5,481.9 894.0,481.9 893.6,481.8 893.2,481.8 892.8,481.8 892.3,481.8 891.9,481.8 891.5,481.8 891.1,481.8 890.6,481.8 890.2,481.8" fill="#4472c4" stroke="#fff" stroke-opacity="0.75" stroke-width="0.6" stroke-linejoin="round"/>
<polygon points="900.3,369.8 890.2,481.8 890.0,481.8 889.8,481.8 889.6,481.8 889.4,481.8 889.2,481.8 888.9,481.7 888.7,481.7 888.5,481.7 888.3,481.7 888.1,481.7 887.9,481.7 887.7,481.7 887.5,481.7 887.2,481.7 887.0,481.7 886.8,481.7 886.6,481.7 886.4,481.7 886.2,481.7 886.0,481.7 885.8,481.7 885.5,481.6 885.3,481.6 885.1,481.6 884.9,481.6 884.7,481.6 884.5,481.6 884.3,481.6 884.1,481.6 883.8,481.6 883.6,481.6 883.4,481.6 883.2,481.6 883.0,481.5 882.8,481.5 882.6,481.5 882.4,481.5 882.1,481.5 881.9,481.5 881.7,481.5 881.5,481.5 881.3,481.5 881.1,481.5 880.9,481.5 880.7,481.4 880.4,481.4 880.2,481.4 880.0,481.4 879.8,481.4 879.6,481.4 879.4,481.4 879.2,481.4 879.0,481.4 878.7,481.4 878.5,481.3 878.3,481.3 878.1,481.3 877.9,481.3 877.7,481.3 877.5,481.3" fill="#70ad47" stroke="#fff" stroke-opacity="0.75" stroke-width="0.6" stroke-linejoin="round"/>
<polygon points="900.3,369.8 877.5,481.3 876.7,481.2 876.0,481.2 875.2,481.2 874.4,481.1 873.7,481.1 872.9,481.0 872.1,481.0 871.4,480.9 870.6,480.9 869.9,480.8 869.1,480.8 868.3,480.7 867.6,480.6 866.8,480.6 866.1,480.5 865.3,480.5 864.6,480.4 863.8,480.3 863.1,480.3 862.3,480.2 861.5,480.1 860.8,480.1 860.0,480.0 859.3,479.9 858.5,479.8 857.8,479.8 857.0,479.7 856.3,479.6 855.5,479.5 854.8,479.4 854.0,479.4 853.3,479.3 852.5,479.2 851.8,479.1 851.1,479.0 850.3,478.9 849.6,478.8 848.8,478.7 848.1,478.7 847.3,478.6 846.6,478.5 845.9,478.4 845.1,478.3 844.4,478.2 843.6,478.1 842.9,478.0 842.2,477.9 841.4,477.8 840.7,477.7 840.0,477.5 839.2,477.4 838.5,477.3 837.8,477.2 837.1,477.1 836.3,477.0 835.6,476.9 834.9,476.8 834.1,476.6 833.4,476.5 832.7,476.4" fill="#255e91" stroke="#fff" stroke-opacity="0.75" stroke-width="0.6" stroke-linejoin="round"/>
<polygon points="900.3,369.8 832.7,476.4 824.9,475.0 817.2,473.4 809.6,471.7 802.2,469.9 795.0,467.9 788.0,465.8 781.2,463.5 774.5,461.1 768.1,458.6 761.9,455.9 756.0,453.2 750.3,450.3 744.8,447.3 739.7,444.2 734.8,441.0 730.2,437.7 725.9,434.3 721.8,430.9 718.2,427.4 714.8,423.8 711.7,420.1 709.0,416.4 706.6,412.6 704.5,408.8 702.8,404.9 701.4,401.1 700.4,397.2 699.7,393.2 699.3,389.3 699.3,385.4 699.7,381.4 700.4,377.5 701.4,373.6 702.8,369.7 704.6,365.9 706.7,362.1 709.1,358.3 711.8,354.6 714.9,350.9 718.3,347.3 722.0,343.8 726.0,340.3 730.3,337.0 734.9,333.7 739.8,330.5 745.0,327.4 750.4,324.4 756.1,321.5 762.1,318.8 768.3,316.1 774.7,313.6 781.4,311.2 788.2,309.0 795.3,306.8 802.5,304.8 809.9,303.0 817.4,301.3 825.1,299.8 832.9,298.4 840.9,297.1" fill="#9e480e" stroke="#fff" stroke-opacity="0.75" stroke-width="0.6" stroke-linejoin="round"/>
<polygon points="900.3,369.8 840.9,297.1 841.4,297.0 842.0,297.0 842.6,296.9 843.1,296.8 843.7,296.7 844.3,296.6 844.8,296.6 845.4,296.5 846.0,296.4 846.5,296.3 847.1,296.3 847.7,296.2 848.2,296.1 848.8,296.1 849.4,296.0 850.0,295.9 850.5,295.8 851.1,295.8 851.7,295.7 852.2,295.6 852.8,295.6 853.4,295.5 854.0,295.4 854.5,295.4 855.1,295.3 855.7,295.3 856.3,295.2 856.8,295.1 857.4,295.1 858.0,295.0 858.6,295.0 859.1,294.9 859.7,294.8 860.3,294.8 860.9,294.7 861.4,294.7 862.0,294.6 862.6,294.6 863.2,294.5 863.8,294.5 864.3,294.4 864.9,294.4 865.5,294.3 866.1,294.3 866.7,294.2 867.2,294.2 867.8,294.1 868.4,294.1 869.0,294.1 869.6,294.0 870.1,294.0 870.7,293.9 871.3,293.9 871.9,293.8 872.5,293.8 873.1,293.8 873.6,293.7 874.2,293.7 874.8,293.7 875.4,293.6" fill="#636363" stroke="#fff" stroke-opacity="0.75" stroke-width="0.6" stroke-linejoin="round"/>
<polygon points="900.3,369.8 875.4,293.6 875.6,293.6 875.8,293.6 875.9,293.6 876.1,293.6 876.3,293.6 876.5,293.6 876.7,293.6 876.8,293.5 877.0,293.5 877.2,293.5 877.4,293.5 877.6,293.5 877.7,293.5 877.9,293.5 878.1,293.5 878.3,293.5 878.4,293.5 878.6,293.5 878.8,293.4 879.0,293.4 879.2,293.4 879.3,293.4 879.5,293.4 879.7,293.4 879.9,293.4 880.1,293.4 880.2,293.4 880.4,293.4 880.6,293.4 880.8,293.3 881.0,293.3 881.1,293.3 881.3,293.3 881.5,293.3 881.7,293.3 881.9,293.3 882.0,293.3 882.2,293.3 882.4,293.3 882.6,293.3 882.8,293.3 882.9,293.3 883.1,293.2 883.3,293.2 883.5,293.2 883.7,293.2 883.8,293.2 884.0,293.2 884.2,293.2 884.4,293.2 884.6,293.2 884.7,293.2 884.9,293.2 885.1,293.2 885.3,293.2 885.5,293.2 885.6,293.2 885.8,293.1 886.0,293.1 886.2,293.1" fill="#997300" stroke="#fff" stroke-opacity="0.75" stroke-width="0.6" stroke-linejoin="round"/>
<polygon points="900.3,369.8 886.2,293.1 886.4,293.1 886.6,293.1 886.9,293.1 887.1,293.1 887.4,293.1 887.6,293.1 887.8,293.1 888.1,293.1 888.3,293.1 888.5,293.1 888.8,293.1 889.0,293.0 889.2,293.0 889.5,293.0 889.7,293.0 889.9,293.0 890.2,293.0 890.4,293.0 890.6,293.0 890.9,293.0 891.1,293.0 891.3,293.0 891.6,293.0 891.8,293.0 892.1,293.0 892.3,293.0 892.5,293.0 892.8,293.0 893.0,293.0 893.2,293.0 893.5,293.0 893.7,293.0 893.9,292.9 894.2,292.9 894.4,292.9 894.6,292.9 894.9,292.9 895.1,292.9 895.4,292.9 895.6,292.9 895.8,292.9 896.1,292.9 896.3,292.9 896.5,292.9 896.8,292.9 897.0,292.9 897.2,292.9 897.5,292.9 897.7,292.9 897.9,292.9 898.2,292.9 898.4,292.9 898.7,292.9 898.9,292.9 899.1,292.9 899.4,292.9 899.6,292.9 899.8,292.9 900.1,292.9 900.3,292.9" fill="#264478" stroke="#fff" stroke-opacity="0.75" stroke-width="0.6" stroke-linejoin="round"/>
</svg>
<span class="t" style="left:846.43px;top:254.92px;font-size:16.4px;letter-spacing:0.594px;color:#595959">Diagrammtitel</span>
<div class="abs" style="left:581.7px;top:556.5px;width:4px;height:4px;background:#5b9bd5"></div>
<span class="t" style="left:589.17px;top:553.42px;font-size:11.2px;letter-spacing:0.265px;color:#595959">Miete</span>
<div class="abs" style="left:623.4px;top:556.5px;width:4px;height:4px;background:#ed7d31"></div>
<span class="t" style="left:630.67px;top:553.42px;font-size:11.2px;letter-spacing:-0.056px;color:#595959">Strom</span>
<div class="abs" style="left:666.4px;top:556.5px;width:4px;height:4px;background:#a5a5a5"></div>
<span class="t" style="left:673.57px;top:553.42px;font-size:11.2px;letter-spacing:0.098px;color:#595959">Lebensmittel</span>
<div class="abs" style="left:743.4px;top:556.5px;width:4px;height:4px;background:#ffc000"></div>
<span class="t" style="left:750.57px;top:553.42px;font-size:11.2px;letter-spacing:0.126px;color:#595959">Sprit</span>
<div class="abs" style="left:779.4px;top:556.5px;width:4px;height:4px;background:#4472c4"></div>
<span class="t" style="left:786.57px;top:553.42px;font-size:11.2px;letter-spacing:0.053px;color:#595959">Lebensmittel</span>
<div class="abs" style="left:856.4px;top:556.5px;width:4px;height:4px;background:#70ad47"></div>
<span class="t" style="left:863.07px;top:553.42px;font-size:11.2px;letter-spacing:-0.194px;color:#595959">Sozialleben</span>
<div class="abs" style="left:924.3px;top:556.5px;width:4px;height:4px;background:#255e91"></div>
<span class="t" style="left:932.07px;top:553.42px;font-size:11.2px;letter-spacing:-0.002px;color:#595959">Lebensmittel</span>
<div class="abs" style="left:1001.3px;top:556.5px;width:4px;height:4px;background:#9e480e"></div>
<span class="t" style="left:1008.57px;top:553.42px;font-size:11.2px;letter-spacing:0.465px;color:#595959">Miete</span>
<div class="abs" style="left:1043.6px;top:556.5px;width:4px;height:4px;background:#636363"></div>
<span class="t" style="left:1050.77px;top:553.42px;font-size:11.2px;letter-spacing:-0.031px;color:#595959">Strom</span>
<div class="abs" style="left:1086.3px;top:556.5px;width:4px;height:4px;background:#997300"></div>
<span class="t" style="left:1093.77px;top:553.42px;font-size:11.2px;letter-spacing:-0.214px;color:#595959">Sozialleben</span>
<div class="abs" style="left:1155.3px;top:556.5px;width:4px;height:4px;background:#264478"></div>
<span class="t" style="left:1162.57px;top:553.42px;font-size:11.2px;letter-spacing:0.044px;color:#595959">Lebensmittel</span>
<div class="abs" style="left:1345px;top:164px;width:21px;height:482px;background:#e6e6e6"></div>
<div class="abs" style="left:1344px;top:183px;width:1px;height:463px;background:#a6a6a6"></div>
<div class="abs" style="left:0;top:645px;width:1345px;height:1px;background:#a6a6a6"></div>
<div class="abs" style="left:1348px;top:165px;width:15px;height:15px;background:#fff;border:1px solid #d4d4d4"></div>
<svg class="abs" style="left:1348px;top:165px" width="15" height="15" viewBox="0 0 15 15"><path d="M4 9.300h7l-3.500-4z" fill="#606060"/></svg>
<div class="abs" style="left:1348px;top:181px;width:15px;height:430px;background:#fff;border:1px solid #b9b9b9"></div>
<div class="abs" style="left:1348px;top:611px;width:15px;height:21px;background:#d2d2d2"></div>
<div class="abs" style="left:1348px;top:632px;width:15px;height:14px;background:#fff;border:1px solid #d4d4d4"></div>
<svg class="abs" style="left:1348px;top:632px" width="15" height="14" viewBox="0 0 15 14"><path d="M4 4.800h7l-3.500 4z" fill="#606060"/></svg>
<div class="abs" style="left:0;top:646px;width:1366px;height:24px;background:#e6e6e6"></div>
<div id="bottombar" class="abs" style="left:0;top:646px;width:1366px;height:24px">
<svg class="abs" style="left:24px;top:8px" width="8" height="10" viewBox="0 0 8 10"><path d="M6 1v8L1.500 5z" fill="#c2c2c2"/></svg>
<svg class="abs" style="left:54px;top:8px" width="8" height="10" viewBox="0 0 8 10"><path d="M2 1v8L6.500 5z" fill="#c2c2c2"/></svg>
<div class="abs" style="left:100px;top:-1px;width:76px;height:25px;background:#fff;border-bottom:2px solid #217346;border-left:1px solid #c3c3c3;border-right:1px solid #c3c3c3"></div>
<span class="t" style="left:111.300px;top:5.800px;font-size:13px;font-weight:700;color:#217346;letter-spacing:0.248px">Tabelle1</span>
<svg class="abs" style="left:208px;top:4px" width="17" height="17" viewBox="0 0 17 17"><circle cx="8.500" cy="8.500" r="7.300" fill="none" stroke="#5c5c5c" stroke-width="1.400"/><path d="M4.700 8.500h7.600M8.500 4.700v7.600" stroke="#555" stroke-width="1.900"/></svg>
<div class="abs" style="left:819px;top:8px;width:2px;height:2px;background:#a8a8a8;box-shadow:0 4px 0 #a8a8a8,0 8px 0 #a8a8a8"></div>
<div class="abs" style="left:836px;top:6px;width:509px;height:15px;background:#d2d2d2"></div>
<div class="abs" style="left:836px;top:6px;width:15px;height:15px;background:#fff;border:1px solid #c6c6c6"></div>
<svg class="abs" style="left:836px;top:6px" width="15" height="15" viewBox="0 0 15 15"><path d="M9.300 4v7l-4-3.500z" fill="#606060"/></svg>
<div class="abs" style="left:850px;top:6px;width:427px;height:15px;background:#fff;border:1px solid #ababab"></div>
<div class="abs" style="left:1330px;top:6px;width:15px;height:15px;background:#fff;border:1px solid #c6c6c6"></div>
<svg class="abs" style="left:1330px;top:6px" width="15" height="15" viewBox="0 0 15 15"><path d="M5.800 4v7l4-3.500z" fill="#606060"/></svg>
</div>
</div></body></html>
